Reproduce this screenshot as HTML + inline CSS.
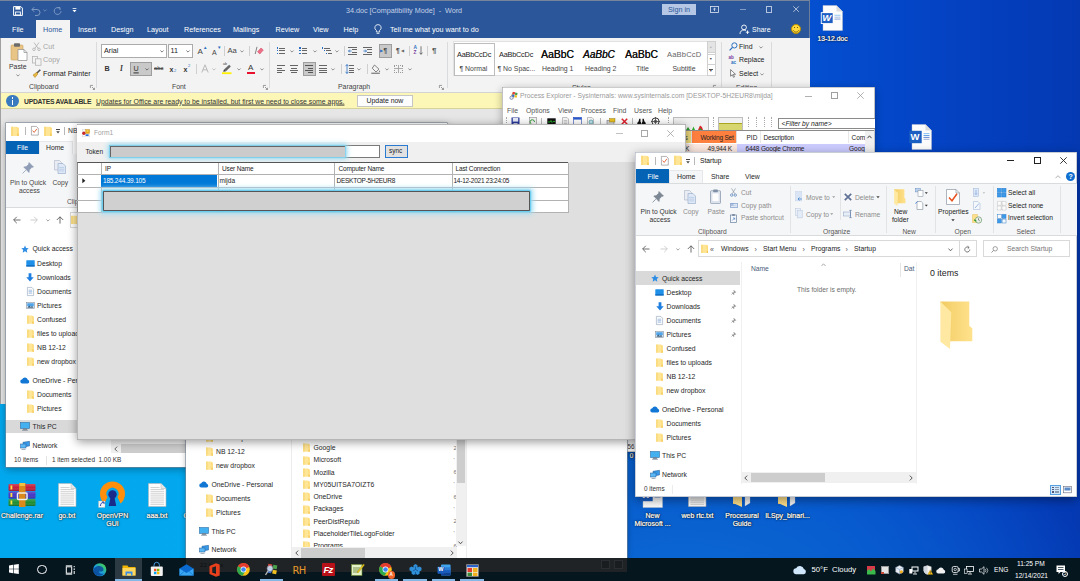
<!DOCTYPE html>
<html><head><meta charset="utf-8"><title>Desktop</title>
<style>
*{box-sizing:border-box;margin:0;padding:0}
html,body{width:1080px;height:581px;overflow:hidden;background:#043cbe}
body{position:relative;font-family:"Liberation Sans",sans-serif;font-size:6.8px;color:#222;line-height:1}
.a{position:absolute}
.t{position:absolute;white-space:nowrap;line-height:1;transform:translateY(-50%)}
.win{position:absolute;overflow:hidden}
svg{position:absolute;overflow:visible}
.vs{position:absolute;width:1px;background:#dadbdc}
</style></head><body>
<div class="a" id="desk" style="left:0;top:0;width:1080px;height:581px;background:
radial-gradient(ellipse 420px 200px at 680px 590px,#0b6ad6 0,#0960cf 35%,rgba(8,84,200,0) 100%),
linear-gradient(90deg,#02a8ee 0,#03a6ee 575px,#0858d0 640px,#0450d0 810px,#0446c8 900px,#043ebc 1000px,#0439b2 1080px)"></div>
<svg style="left:820px;top:4.5px" width="23" height="26" viewBox="0 0 23 26"><path d="M3 .5h13.500l6 6v19H3z" fill="#fcfcfc" stroke="#c8c8c8" stroke-width=".4"/><path d="M16.500 .5v6h6z" fill="#dcdcdc"/><path d="M14.500 10.300h6" stroke="#6ab4f2" stroke-width=".7"/><path d="M14.500 12.200h6" stroke="#8aa8d8" stroke-width=".7"/><path d="M14.500 14.100h6" stroke="#5a80c8" stroke-width=".7"/><rect x=".8" y="7.200" width="12.800" height="11.800" fill="#fff"/><rect x="1.700" y="8.100" width="11" height="10" fill="#1f5fc4"/></svg><span class="t" style="left:822.3px;top:17.7px;font-size:9.500px;color:#fff;font-weight:bold;font-style:italic;letter-spacing:-.5px">W</span><span class="t" style="left:832.5px;top:38.8px;font-size:6.8px;color:#fff;transform:translate(-50%,-50%);text-shadow:.5px .7px .8px rgba(0,0,0,.95),0 0 1.500px rgba(0,0,0,.85),0 0 2.500px rgba(0,0,0,.55);-webkit-text-stroke:.22px #fff;text-align:center">13-12.doc</span><svg style="left:909.3px;top:124.1px" width="23" height="26" viewBox="0 0 23 26"><path d="M3 .5h13.500l6 6v19H3z" fill="#fcfcfc" stroke="#c8c8c8" stroke-width=".4"/><path d="M16.500 .5v6h6z" fill="#dcdcdc"/><path d="M14.500 9.600h6" stroke="#6ab4f2" stroke-width=".8"/><path d="M14.500 11.500h6" stroke="#3f8ae0" stroke-width=".8"/><path d="M14.500 13.400h6" stroke="#3a6fc8" stroke-width=".8"/><path d="M14.500 15.300h6" stroke="#8a9ed0" stroke-width=".8"/><rect x=".3" y="6.800" width="12.400" height="12.400" fill="#1b5ec2"/></svg><span class="t" style="left:910.6px;top:137.3px;font-size:9.500px;color:#fff;font-weight:bold">W</span><svg style="left:8px;top:482.5px" width="28" height="24" viewBox="0 0 28 24"><defs><linearGradient id="rg" x1="0" y1="0" x2="0" y2="1"><stop offset="0" stop-color="#fff" stop-opacity=".18"/><stop offset=".5" stop-color="#fff" stop-opacity="0"/><stop offset="1" stop-color="#000" stop-opacity=".25"/></linearGradient></defs><rect x=".5" y="1" width="27" height="7" rx="1" fill="#c4203e"/><rect x=".5" y="8.500" width="27" height="7" rx="1" fill="#4436c4"/><rect x=".5" y="16" width="27" height="7" rx="1" fill="#1f8f35"/><rect x=".5" y="1" width="27" height="7" rx="1" fill="url(#rg)"/><rect x=".5" y="8.500" width="27" height="7" rx="1" fill="url(#rg)"/><rect x=".5" y="16" width="27" height="7" rx="1" fill="url(#rg)"/><rect x="2.500" y="2.500" width="1.800" height="4" fill="#ffe040"/><rect x="2.500" y="10" width="1.800" height="4" fill="#ffe040"/><rect x="2.500" y="17.500" width="1.800" height="4" fill="#ffe040"/><rect x="11" y="0" width="6.500" height="24" fill="#d98a1a"/><rect x="9.500" y="10" width="9.500" height="6.500" rx="1" fill="none" stroke="#f0f0e8" stroke-width="1.500"/><rect x="11.500" y="0" width="5.500" height="3" fill="#f0c040"/></svg><span class="t" style="left:22px;top:514.7px;font-size:7px;color:#fff;transform:translate(-50%,-50%);text-shadow:.5px .7px .8px rgba(0,0,0,.95),0 0 1.500px rgba(0,0,0,.85),0 0 2.500px rgba(0,0,0,.55);-webkit-text-stroke:.22px #fff;text-align:center">Challenge.rar</span><svg style="left:57.75px;top:482.5px" width="18.5" height="24" viewBox="0 0 18.5 24"><path d="M.5.500h12.500l5 5v18H.5z" fill="#fdfdfd" stroke="#b5b5b5" stroke-width=".6"/><path d="M13 .500v5h5" fill="#e8e8e8" stroke="#b5b5b5" stroke-width=".5"/><path d="M2.500 4.5h9" stroke="#bdbdbd" stroke-width=".7"/><path d="M2.500 6.6h13.5" stroke="#bdbdbd" stroke-width=".7"/><path d="M2.500 8.7h13.5" stroke="#bdbdbd" stroke-width=".7"/><path d="M2.500 10.8h13.5" stroke="#bdbdbd" stroke-width=".7"/><path d="M2.500 12.9h13.5" stroke="#bdbdbd" stroke-width=".7"/><path d="M2.500 15.0h13.5" stroke="#bdbdbd" stroke-width=".7"/><path d="M2.500 17.1h13.5" stroke="#bdbdbd" stroke-width=".7"/><path d="M2.500 19.200000000000003h13.5" stroke="#bdbdbd" stroke-width=".7"/><path d="M2.500 21.3h13.5" stroke="#bdbdbd" stroke-width=".7"/></svg><span class="t" style="left:67px;top:514.7px;font-size:7px;color:#fff;transform:translate(-50%,-50%);text-shadow:.5px .7px .8px rgba(0,0,0,.95),0 0 1.500px rgba(0,0,0,.85),0 0 2.500px rgba(0,0,0,.55);-webkit-text-stroke:.22px #fff;text-align:center">go.txt</span><svg style="left:99px;top:482px" width="27" height="26" viewBox="0 0 27 26"><path d="M5.500 21.500A12.500 12.500 0 1 1 21.500 21.500L18.500 15A6 6 0 1 0 8.500 15z" fill="#ff8f0a"/><circle cx="13.500" cy="12.500" r="4.200" fill="#1a2a8a"/><path d="M11.800 14h3.400l2 10h-7.400z" fill="#1a2a8a"/><rect x="-.5" y="19" width="6.500" height="6.500" fill="#f4f4f4" stroke="#aaa" stroke-width=".3"/><path d="M1.500 24c0-2.500 1-3.500 3-3.500M3 20h2v2" fill="none" stroke="#2a4ab0" stroke-width="1"/></svg><span class="t" style="left:112.5px;top:514.7px;font-size:7px;color:#fff;transform:translate(-50%,-50%);text-shadow:.5px .7px .8px rgba(0,0,0,.95),0 0 1.500px rgba(0,0,0,.85),0 0 2.500px rgba(0,0,0,.55);-webkit-text-stroke:.22px #fff;text-align:center">OpenVPN</span><span class="t" style="left:112.5px;top:523.2px;font-size:7px;color:#fff;transform:translate(-50%,-50%);text-shadow:.5px .7px .8px rgba(0,0,0,.95),0 0 1.500px rgba(0,0,0,.85),0 0 2.500px rgba(0,0,0,.55);-webkit-text-stroke:.22px #fff;text-align:center">GUI</span><svg style="left:147.75px;top:482.5px" width="18.5" height="24" viewBox="0 0 18.5 24"><path d="M.5.500h12.500l5 5v18H.5z" fill="#fdfdfd" stroke="#b5b5b5" stroke-width=".6"/><path d="M13 .500v5h5" fill="#e8e8e8" stroke="#b5b5b5" stroke-width=".5"/><path d="M2.500 4.5h9" stroke="#bdbdbd" stroke-width=".7"/><path d="M2.500 6.6h13.5" stroke="#bdbdbd" stroke-width=".7"/><path d="M2.500 8.7h13.5" stroke="#bdbdbd" stroke-width=".7"/><path d="M2.500 10.8h13.5" stroke="#bdbdbd" stroke-width=".7"/><path d="M2.500 12.9h13.5" stroke="#bdbdbd" stroke-width=".7"/><path d="M2.500 15.0h13.5" stroke="#bdbdbd" stroke-width=".7"/><path d="M2.500 17.1h13.5" stroke="#bdbdbd" stroke-width=".7"/><path d="M2.500 19.200000000000003h13.5" stroke="#bdbdbd" stroke-width=".7"/><path d="M2.500 21.3h13.5" stroke="#bdbdbd" stroke-width=".7"/></svg><span class="t" style="left:157px;top:514.7px;font-size:7px;color:#fff;transform:translate(-50%,-50%);text-shadow:.5px .7px .8px rgba(0,0,0,.95),0 0 1.500px rgba(0,0,0,.85),0 0 2.500px rgba(0,0,0,.55);-webkit-text-stroke:.22px #fff;text-align:center">aaa.txt</span><span class="t" style="left:186px;top:514.7px;font-size:7px;color:#fff;transform:translate(-50%,-50%);text-shadow:.5px .7px .8px rgba(0,0,0,.95),0 0 1.500px rgba(0,0,0,.85),0 0 2.500px rgba(0,0,0,.55);-webkit-text-stroke:.22px #fff;text-align:center">C</span><svg style="left:640px;top:481.5px" width="23" height="26" viewBox="0 0 23 26"><path d="M3 .5h13.500l6 6v19H3z" fill="#fcfcfc" stroke="#c8c8c8" stroke-width=".4"/><path d="M16.500 .5v6h6z" fill="#dcdcdc"/><path d="M14.500 9.600h6" stroke="#6ab4f2" stroke-width=".8"/><path d="M14.500 11.500h6" stroke="#3f8ae0" stroke-width=".8"/><path d="M14.500 13.400h6" stroke="#3a6fc8" stroke-width=".8"/><path d="M14.500 15.300h6" stroke="#8a9ed0" stroke-width=".8"/><rect x=".3" y="6.800" width="12.400" height="12.400" fill="#1b5ec2"/></svg><span class="t" style="left:641.3px;top:494.7px;font-size:9.500px;color:#fff;font-weight:bold">W</span><span class="t" style="left:652.5px;top:514.7px;font-size:7px;color:#fff;transform:translate(-50%,-50%);text-shadow:.5px .7px .8px rgba(0,0,0,.95),0 0 1.500px rgba(0,0,0,.85),0 0 2.500px rgba(0,0,0,.55);-webkit-text-stroke:.22px #fff;text-align:center">New</span><span class="t" style="left:652.5px;top:523.2px;font-size:7px;color:#fff;transform:translate(-50%,-50%);text-shadow:.5px .7px .8px rgba(0,0,0,.95),0 0 1.500px rgba(0,0,0,.85),0 0 2.500px rgba(0,0,0,.55);-webkit-text-stroke:.22px #fff;text-align:center">Microsoft ...</span><svg style="left:687.75px;top:482.5px" width="18.5" height="24" viewBox="0 0 18.5 24"><path d="M.5.500h12.500l5 5v18H.5z" fill="#fdfdfd" stroke="#b5b5b5" stroke-width=".6"/><path d="M13 .500v5h5" fill="#e8e8e8" stroke="#b5b5b5" stroke-width=".5"/><path d="M2.500 4.5h9" stroke="#bdbdbd" stroke-width=".7"/><path d="M2.500 6.6h13.5" stroke="#bdbdbd" stroke-width=".7"/><path d="M2.500 8.7h13.5" stroke="#bdbdbd" stroke-width=".7"/><path d="M2.500 10.8h13.5" stroke="#bdbdbd" stroke-width=".7"/><path d="M2.500 12.9h13.5" stroke="#bdbdbd" stroke-width=".7"/><path d="M2.500 15.0h13.5" stroke="#bdbdbd" stroke-width=".7"/><path d="M2.500 17.1h13.5" stroke="#bdbdbd" stroke-width=".7"/><path d="M2.500 19.200000000000003h13.5" stroke="#bdbdbd" stroke-width=".7"/><path d="M2.500 21.3h13.5" stroke="#bdbdbd" stroke-width=".7"/></svg><span class="t" style="left:697.5px;top:514.7px;font-size:7px;color:#fff;transform:translate(-50%,-50%);text-shadow:.5px .7px .8px rgba(0,0,0,.95),0 0 1.500px rgba(0,0,0,.85),0 0 2.500px rgba(0,0,0,.55);-webkit-text-stroke:.22px #fff;text-align:center">web rtc.txt</span><svg style="left:732px;top:481px" width="20" height="26" viewBox="0 0 20 26"><path d="M1 1h6l2 2v20H1z" fill="#e8bf58"/><path d="M4 4h14v18l-5 3V7z" fill="#f6f6f6" stroke="#ccc" stroke-width=".3"/><rect x="7" y="4" width="6" height="10" fill="#c8283a"/><path d="M1 5l9 3v18L1 22z" fill="#ffe08a"/></svg><span class="t" style="left:742px;top:514.7px;font-size:7px;color:#fff;transform:translate(-50%,-50%);text-shadow:.5px .7px .8px rgba(0,0,0,.95),0 0 1.500px rgba(0,0,0,.85),0 0 2.500px rgba(0,0,0,.55);-webkit-text-stroke:.22px #fff;text-align:center">Procesural</span><span class="t" style="left:742px;top:523.2px;font-size:7px;color:#fff;transform:translate(-50%,-50%);text-shadow:.5px .7px .8px rgba(0,0,0,.95),0 0 1.500px rgba(0,0,0,.85),0 0 2.500px rgba(0,0,0,.55);-webkit-text-stroke:.22px #fff;text-align:center">Guide</span><svg style="left:777px;top:481px" width="20" height="26" viewBox="0 0 20 26"><path d="M1 1h6l2 2v20H1z" fill="#e8bf58"/><path d="M4 4h14v18l-5 3V7z" fill="#f6f6f6" stroke="#ccc" stroke-width=".3"/><rect x="7" y="4" width="6" height="10" fill="#5a6a7a"/><path d="M1 5l9 3v18L1 22z" fill="#ffe08a"/></svg><span class="t" style="left:787.5px;top:514.7px;font-size:7px;color:#fff;transform:translate(-50%,-50%);text-shadow:.5px .7px .8px rgba(0,0,0,.95),0 0 1.500px rgba(0,0,0,.85),0 0 2.500px rgba(0,0,0,.55);-webkit-text-stroke:.22px #fff;text-align:center">ILSpy_binari...</span><span class="t" style="left:631.5px;top:456px;font-size:6.5px;color:#fff;transform:translate(-50%,-50%);text-shadow:.5px .7px .8px rgba(0,0,0,.95),0 0 1.500px rgba(0,0,0,.85),0 0 2.500px rgba(0,0,0,.55);-webkit-text-stroke:.22px #fff;text-align:center">0</span><div class="win" id="word" style="left:0;top:0;width:810px;height:404px;background:#e6e6e6">
 <div class="a" style="left:0;top:0;width:810px;height:38px;background:#2b579a"></div>
 <div class="a" style="left:0;top:0;width:810px;height:.9px;background:#76849c"></div><div class="a" style="left:809.200px;top:0;width:.8px;height:404px;background:#6f7f99"></div>
 <!-- quick access -->
 <svg style="left:13px;top:6px" width="10" height="10" viewBox="0 0 10 10"><path d="M.6.6h7.3l1.5 1.5v7.3H.6z" fill="none" stroke="#fff" stroke-width="1"/><rect x="2.4" y="1" width="5" height="2.6" fill="#fff"/><rect x="2.6" y="6" width="4.8" height="3" fill="none" stroke="#fff" stroke-width=".9"/></svg>
 <svg style="left:31px;top:6px" width="10" height="10" viewBox="0 0 10 10"><path d="M1 3.5h5a3 3 0 0 1 0 6H4M3.2 1.2L.9 3.5l2.3 2.3" fill="none" stroke="#7f9ac4" stroke-width="1"/></svg>
 <svg style="left:43px;top:9px" width="4" height="3" viewBox="0 0 4 3"><path d="M.3.5L2 2.2 3.7.5" fill="none" stroke="#7f9ac4" stroke-width=".7"/></svg>
 <svg style="left:53px;top:6px" width="9" height="10" viewBox="0 0 9 10"><path d="M6.5 2.2A3.4 3.4 0 1 0 8 5.2M4.6 1.6h2.4v2.4" fill="none" stroke="#7f9ac4" stroke-width="1"/></svg>
 <svg style="left:72px;top:8px" width="5" height="5" viewBox="0 0 5 5"><path d="M.6.5h3.8" stroke="#fff" stroke-width=".8"/><path d="M.5 2h4L2.5 4.3z" fill="#fff"/></svg>
 <span class="t" style="left:346px;top:11px;font-size:7.2px;color:#c3d0e6">34.doc [Compatibility Mode]&nbsp; -&nbsp; Word</span>
 <!-- sign in -->
 <div class="a" style="left:662px;top:4.200px;width:34px;height:11px;background:#b5c7e5"></div>
 <span class="t" style="left:668px;top:10px;font-size:7.2px;color:#2b579a">Sign in</span>
 <svg style="left:710px;top:6px" width="9" height="7" viewBox="0 0 9 7"><rect x=".5" y=".5" width="8" height="6" fill="none" stroke="#dfe7f3" stroke-width=".8"/><path d="M4.5 5V2.2M3.2 3.4l1.3-1.3 1.3 1.3" fill="none" stroke="#dfe7f3" stroke-width=".8"/></svg>
 <div class="a" style="left:739.500px;top:8.800px;width:6px;height:.9px;background:#7f9ac4"></div>
 <div class="a" style="left:766.300px;top:6.300px;width:6px;height:6.300px;border:.8px solid #b4c3de"></div>
 <svg style="left:792.800px;top:6.200px" width="6.200" height="6.200" viewBox="0 0 7 7"><path d="M.4.4l6.2 6.2M6.6.4L.4 6.6" stroke="#cfd9ea" stroke-width=".9"/></svg>
 <!-- tabs -->
 <div class="a" style="left:36px;top:20px;width:34px;height:18.5px;background:#f3f3f3"></div>
 <span class="t" style="left:12px;top:29.5px;font-size:7.2px;color:#fff">File</span>
 <span class="t" style="left:43px;top:29.5px;font-size:7.2px;color:#2b579a">Home</span>
 <span class="t" style="left:78px;top:29.5px;font-size:7.2px;color:#fff">Insert</span>
 <span class="t" style="left:111px;top:29.5px;font-size:7.2px;color:#fff">Design</span>
 <span class="t" style="left:147px;top:29.5px;font-size:7.2px;color:#fff">Layout</span>
 <span class="t" style="left:184px;top:29.5px;font-size:7.2px;color:#fff">References</span>
 <span class="t" style="left:233px;top:29.5px;font-size:7.2px;color:#fff">Mailings</span>
 <span class="t" style="left:275.5px;top:29.5px;font-size:7.2px;color:#fff">Review</span>
 <span class="t" style="left:313px;top:29.5px;font-size:7.2px;color:#fff">View</span>
 <span class="t" style="left:343.5px;top:29.5px;font-size:7.2px;color:#fff">Help</span>
 <svg style="left:374px;top:24px" width="8" height="11" viewBox="0 0 8 11"><path d="M4 .6a3.1 3.1 0 0 0-1.6 5.8v1.6h3.2V6.4A3.1 3.1 0 0 0 4 .6zM2.6 9.4h2.8" fill="none" stroke="#fff" stroke-width=".8"/></svg>
 <span class="t" style="left:390px;top:29.5px;font-size:7.2px;color:#fff">Tell me what you want to do</span>
 <svg style="left:739px;top:24px" width="11" height="11" viewBox="0 0 11 11"><circle cx="5" cy="3.4" r="2.4" fill="none" stroke="#fff" stroke-width=".9"/><path d="M1 10c0-2.6 1.7-4 4-4 .8 0 1.500.2 2 .5M8.500 6.500v3.500M6.800 8.200h3.400" fill="none" stroke="#fff" stroke-width=".9"/></svg>
 <span class="t" style="left:752px;top:29.500px;font-size:6.950px;color:#fff">Share</span>
 <div class="a" style="left:791px;top:24px;width:10.200px;height:10.200px;border-radius:50%;background:#ffd83b;border:.6px solid #b98f00"></div>
 <div class="a" style="left:793.6px;top:26.6px;width:1.4px;height:1.8px;background:#5a4300;border-radius:50%"></div>
 <div class="a" style="left:797px;top:26.6px;width:1.4px;height:1.8px;background:#5a4300;border-radius:50%"></div>
 <svg style="left:793px;top:29.600px" width="6" height="3" viewBox="0 0 6 3"><path d="M.3.3c1 2.400 4.400 2.400 5.400 0" fill="none" stroke="#5a4300" stroke-width=".7"/></svg>
 <!-- ribbon -->
 <div class="a" style="left:0;top:38px;width:810px;height:55px;background:#f3f3f3;border-bottom:1px solid #d4d4d4"></div>
 <svg style="left:10px;top:42px" width="18" height="19" viewBox="0 0 18 19"><rect x="1" y="3" width="12" height="15" rx="1" fill="#e8c587" stroke="#c9a25a" stroke-width=".6"/><rect x="4" y="1.200" width="6" height="3.600" rx=".8" fill="#6b6b6b"/><path d="M8 7.500h6l3 3v8H8z" fill="#fff" stroke="#8c8c8c" stroke-width=".7"/><path d="M14 7.500v3h3" fill="none" stroke="#8c8c8c" stroke-width=".7"/></svg><span class="t" style="left:9px;top:66.500px;font-size:6.900px;color:#333">Paste</span><svg style="left:15.5px;top:74px" width="4" height="3" viewBox="0 0 4 3"><path d="M.4.5L2 2.100 3.600.5" fill="none" stroke="#666" stroke-width=".7"/></svg><svg style="left:32px;top:42px" width="9" height="9" viewBox="0 0 9 9"><path d="M2 .5l4.200 6M7 .5L2.800 6.500" stroke="#b0b0b0" stroke-width=".8" fill="none"/><circle cx="2" cy="7.300" r="1.300" fill="none" stroke="#b0b0b0" stroke-width=".8"/><circle cx="7" cy="7.300" r="1.300" fill="none" stroke="#b0b0b0" stroke-width=".8"/></svg><span class="t" style="left:43px;top:46.500px;font-size:7.2px;color:#a6a6a6">Cut</span><svg style="left:31.500px;top:55.500px" width="10" height="10" viewBox="0 0 10 10"><rect x=".5" y=".5" width="5" height="6.500" fill="#f3f3f3" stroke="#b5b5b5" stroke-width=".8"/><rect x="3.500" y="2.800" width="5.500" height="6.500" fill="#f3f3f3" stroke="#b5b5b5" stroke-width=".8"/></svg><span class="t" style="left:43px;top:60px;font-size:7.2px;color:#a6a6a6">Copy</span><svg style="left:32px;top:68.500px" width="9" height="9" viewBox="0 0 9 9"><path d="M8.300.7L4.500 4.500" stroke="#555" stroke-width="1.600"/><path d="M4.800 3.200L1 6l2 2.500L5.800 5z" fill="#e9b840" stroke="#a87d16" stroke-width=".5"/></svg><span class="t" style="left:43px;top:73.500px;font-size:7.2px;color:#222">Format Painter</span><span class="t" style="left:29px;top:87px;font-size:6.9px;color:#444">Clipboard</span><svg style="left:90.0px;top:84.5px" width="5" height="5" viewBox="0 0 5 5"><path d="M.4 3V.4H3M2 2l2.400 2.400M4.500 2.800v1.700H2.800" fill="none" stroke="#777" stroke-width=".7"/></svg><div class="vs" style="left:96px;top:42px;height:46px"></div><div class="a" style="left:101px;top:44px;width:65.500px;height:13.700px;background:#fff;border:1px solid #ababab"></div><span class="t" style="left:104px;top:51px;font-size:7.2px;color:#222">Arial</span><svg style="left:160px;top:50px" width="4" height="3" viewBox="0 0 4 3"><path d="M.4.5L2 2.100 3.600.5" fill="none" stroke="#444" stroke-width=".7"/></svg><div class="a" style="left:168px;top:44px;width:24.500px;height:13.700px;background:#fff;border:1px solid #ababab"></div><span class="t" style="left:170.500px;top:51px;font-size:7.2px;color:#222">11</span><svg style="left:186px;top:50px" width="4" height="3" viewBox="0 0 4 3"><path d="M.4.5L2 2.100 3.600.5" fill="none" stroke="#444" stroke-width=".7"/></svg><span class="t" style="left:197.500px;top:51.500px;font-size:8px;color:#444">A</span><span class="t" style="left:203px;top:47.500px;font-size:4.500px;color:#2b6fc0">▲</span><span class="t" style="left:212px;top:52px;font-size:7px;color:#444">A</span><span class="t" style="left:217px;top:47.500px;font-size:4.500px;color:#2b6fc0">▼</span><div class="vs" style="left:223.500px;top:46px;height:10px;background:#cfcfcf"></div><span class="t" style="left:227.500px;top:51px;font-size:7.600px;color:#444">Aa</span><svg style="left:239.5px;top:50px" width="4" height="3" viewBox="0 0 4 3"><path d="M.4.5L2 2.100 3.600.5" fill="none" stroke="#666" stroke-width=".7"/></svg><div class="vs" style="left:249px;top:46px;height:10px;background:#cfcfcf"></div><svg style="left:254px;top:45.500px" width="10" height="10" viewBox="0 0 10 10"><path d="M1.200 8L3 .8" stroke="#666" stroke-width=".8"/><path d="M3.500 5.800L7 2l2.300 2-3.500 4z" fill="#ee6f86" stroke="#c9405c" stroke-width=".5"/></svg><span class="t" style="left:104.500px;top:68.5px;font-size:7.200px;color:#333;font-weight:bold">B</span><span class="t" style="left:120px;top:69.800px;font-size:7.200px;color:#333;font-style:italic;font-family:'Liberation Serif',serif;font-weight:bold">I</span><div class="a" style="left:129.500px;top:62px;width:22px;height:13.500px;background:#c9c9c9;border:1px solid #9e9e9e"></div><span class="t" style="left:133.500px;top:68.5px;font-size:7.200px;color:#333;text-decoration:underline">U</span><svg style="left:144.5px;top:67.5px" width="4" height="3" viewBox="0 0 4 3"><path d="M.4.5L2 2.100 3.600.5" fill="none" stroke="#444" stroke-width=".7"/></svg><span class="t" style="left:154px;top:68.8px;font-size:5.800px;color:#444;text-decoration:line-through">abc</span><span class="t" style="left:169.500px;top:68.5px;font-size:7px;color:#333;font-weight:bold">x</span><span class="t" style="left:174px;top:70.5px;font-size:4px;color:#2b6fc0">2</span><span class="t" style="left:183.500px;top:68.5px;font-size:7px;color:#333;font-weight:bold">x</span><span class="t" style="left:188px;top:66.0px;font-size:4px;color:#2b6fc0">2</span><div class="vs" style="left:195.5px;top:63.5px;height:10px;background:#cfcfcf"></div><svg style="left:201px;top:64px" width="8" height="9" viewBox="0 0 8 9"><path d="M.8 8.500L4 .8l3.200 7.700M2 5.800h4" fill="none" stroke="#b9b9b9" stroke-width="1"/></svg><svg style="left:212px;top:67.5px" width="4" height="3" viewBox="0 0 4 3"><path d="M.4.5L2 2.100 3.600.5" fill="none" stroke="#aaa" stroke-width=".7"/></svg><svg style="left:222px;top:63.500px" width="10" height="10" viewBox="0 0 10 10"><path d="M2 5.500L7.200.8l1.600 1.600L4 7.200z" fill="#666"/><path d="M1.200 7.800l.8-2.300 2 1.700z" fill="#333"/><rect x="0" y="8.300" width="9.500" height="1.800" fill="#ffef00"/></svg><span class="t" style="left:223px;top:65px;font-size:3.600px;color:#444">ab</span><svg style="left:236.5px;top:67.5px" width="4" height="3" viewBox="0 0 4 3"><path d="M.4.5L2 2.100 3.600.5" fill="none" stroke="#666" stroke-width=".7"/></svg><span class="t" style="left:248px;top:67.500px;font-size:8px;color:#333;font-weight:normal">A</span><div class="a" style="left:246.500px;top:71.800px;width:8.500px;height:1.900px;background:#e8112d"></div><svg style="left:259.5px;top:67.5px" width="4" height="3" viewBox="0 0 4 3"><path d="M.4.5L2 2.100 3.600.5" fill="none" stroke="#666" stroke-width=".7"/></svg><span class="t" style="left:172px;top:87px;font-size:6.900px;color:#444">Font</span><svg style="left:263.0px;top:84.5px" width="5" height="5" viewBox="0 0 5 5"><path d="M.4 3V.4H3M2 2l2.400 2.400M4.500 2.800v1.700H2.800" fill="none" stroke="#777" stroke-width=".7"/></svg><div class="vs" style="left:269px;top:42px;height:46px"></div><div class="a" style="left:276.5px;top:47.3px;width:1.500px;height:1.300px;background:#2b6fc0"></div><div class="a" style="left:279.0px;top:47.5px;width:5.500px;height:.9px;background:#666"></div><div class="a" style="left:276.5px;top:50.099999999999994px;width:1.500px;height:1.300px;background:#2b6fc0"></div><div class="a" style="left:279.0px;top:50.3px;width:5.500px;height:.9px;background:#666"></div><div class="a" style="left:276.5px;top:52.9px;width:1.500px;height:1.300px;background:#2b6fc0"></div><div class="a" style="left:279.0px;top:53.1px;width:5.500px;height:.9px;background:#666"></div><svg style="left:289.5px;top:50px" width="4" height="3" viewBox="0 0 4 3"><path d="M.4.5L2 2.100 3.600.5" fill="none" stroke="#666" stroke-width=".7"/></svg><div class="a" style="left:299px;top:47.3px;width:1.500px;height:1.300px;background:#2b6fc0"></div><div class="a" style="left:301.5px;top:47.5px;width:5.500px;height:.9px;background:#666"></div><div class="a" style="left:299px;top:50.099999999999994px;width:1.500px;height:1.300px;background:#2b6fc0"></div><div class="a" style="left:301.5px;top:50.3px;width:5.500px;height:.9px;background:#666"></div><div class="a" style="left:299px;top:52.9px;width:1.500px;height:1.300px;background:#2b6fc0"></div><div class="a" style="left:301.5px;top:53.1px;width:5.500px;height:.9px;background:#666"></div><svg style="left:312.5px;top:50px" width="4" height="3" viewBox="0 0 4 3"><path d="M.4.5L2 2.100 3.600.5" fill="none" stroke="#666" stroke-width=".7"/></svg><div class="a" style="left:321.5px;top:47.3px;width:1.400px;height:1.300px;background:#2b6fc0"></div><div class="a" style="left:324px;top:47.5px;width:6px;height:.9px;background:#666"></div><div class="a" style="left:323.5px;top:50.099999999999994px;width:1.400px;height:1.300px;background:#2b6fc0"></div><div class="a" style="left:326px;top:50.3px;width:5px;height:.9px;background:#666"></div><div class="a" style="left:325.5px;top:52.9px;width:1.400px;height:1.300px;background:#2b6fc0"></div><div class="a" style="left:328px;top:53.1px;width:4px;height:.9px;background:#666"></div><svg style="left:334.5px;top:50px" width="4" height="3" viewBox="0 0 4 3"><path d="M.4.5L2 2.100 3.600.5" fill="none" stroke="#666" stroke-width=".7"/></svg><div class="vs" style="left:343.5px;top:46px;height:10px;background:#cfcfcf"></div><div class="a" style="left:348.0px;top:47.1px;width:9px;height:0.8px;background:#666"></div><div class="a" style="left:352.0px;top:49.300000000000004px;width:5px;height:0.8px;background:#666"></div><div class="a" style="left:352.0px;top:51.5px;width:5px;height:0.8px;background:#666"></div><div class="a" style="left:348.0px;top:53.7px;width:9px;height:0.8px;background:#666"></div><svg style="left:348.0px;top:48.5px" width="4" height="4" viewBox="0 0 4 4"><path d="M3.600 2H.6M1.800.6L.5 2l1.300 1.400" fill="none" stroke="#2b6fc0" stroke-width=".8"/></svg><div class="a" style="left:362.5px;top:47.1px;width:9px;height:0.8px;background:#666"></div><div class="a" style="left:366.5px;top:49.300000000000004px;width:5px;height:0.8px;background:#666"></div><div class="a" style="left:366.5px;top:51.5px;width:5px;height:0.8px;background:#666"></div><div class="a" style="left:362.5px;top:53.7px;width:9px;height:0.8px;background:#666"></div><svg style="left:362.5px;top:48.5px" width="4" height="4" viewBox="0 0 4 4"><path d="M.4 2h3M2.200.6L3.500 2 2.200 3.400" fill="none" stroke="#2b6fc0" stroke-width=".8"/></svg><div class="a" style="left:378.500px;top:44px;width:13.500px;height:13.500px;background:#c9c9c9;border:1px solid #9e9e9e"></div><span class="t" style="left:383.500px;top:51px;font-size:6.500px;color:#444;font-weight:bold">¶</span><span class="t" style="left:380.200px;top:51px;font-size:4px;color:#2b6fc0">▶</span><span class="t" style="left:396px;top:51px;font-size:6.500px;color:#444;font-weight:bold">¶</span><span class="t" style="left:400.500px;top:51px;font-size:4px;color:#666">◀</span><div class="vs" style="left:408.5px;top:46px;height:10px;background:#cfcfcf"></div><span class="t" style="left:413.500px;top:48.300px;font-size:4.800px;color:#2b6fc0;font-weight:bold">A</span><span class="t" style="left:413.500px;top:53px;font-size:4.800px;color:#7a3fa0;font-weight:bold">Z</span><svg style="left:418.500px;top:46px" width="4" height="9" viewBox="0 0 4 9"><path d="M2 .3v8M.5 6.600L2 8.300l1.500-1.700" fill="none" stroke="#555" stroke-width=".8"/></svg><div class="vs" style="left:426.5px;top:46px;height:10px;background:#cfcfcf"></div><span class="t" style="left:432px;top:50.500px;font-size:8px;color:#555;font-weight:bold">¶</span><div class="a" style="left:276.5px;top:65.4px;width:8px;height:0.8px;background:#666"></div><div class="a" style="left:276.5px;top:67.5px;width:5.5px;height:0.8px;background:#666"></div><div class="a" style="left:276.5px;top:69.60000000000001px;width:8px;height:0.8px;background:#666"></div><div class="a" style="left:276.5px;top:71.7px;width:5.5px;height:0.8px;background:#666"></div><div class="a" style="left:290px;top:65.4px;width:8px;height:0.8px;background:#666"></div><div class="a" style="left:291.3px;top:67.5px;width:5.5px;height:0.8px;background:#666"></div><div class="a" style="left:290px;top:69.60000000000001px;width:8px;height:0.8px;background:#666"></div><div class="a" style="left:291.3px;top:71.7px;width:5.5px;height:0.8px;background:#666"></div><div class="a" style="left:302.500px;top:62px;width:13.500px;height:13.500px;background:#c9c9c9;border:1px solid #9e9e9e"></div><div class="a" style="left:305.2px;top:65.4px;width:8px;height:0.8px;background:#555"></div><div class="a" style="left:307.7px;top:67.5px;width:5.5px;height:0.8px;background:#555"></div><div class="a" style="left:305.2px;top:69.60000000000001px;width:8px;height:0.8px;background:#555"></div><div class="a" style="left:307.7px;top:71.7px;width:5.5px;height:0.8px;background:#555"></div><div class="a" style="left:319px;top:65.4px;width:8px;height:0.8px;background:#666"></div><div class="a" style="left:319px;top:67.5px;width:8px;height:0.8px;background:#666"></div><div class="a" style="left:319px;top:69.60000000000001px;width:8px;height:0.8px;background:#666"></div><div class="a" style="left:319px;top:71.7px;width:8px;height:0.8px;background:#666"></div><svg style="left:330.5px;top:67.5px" width="4" height="3" viewBox="0 0 4 3"><path d="M.4.5L2 2.100 3.600.5" fill="none" stroke="#666" stroke-width=".7"/></svg><div class="vs" style="left:340.5px;top:63.5px;height:10px;background:#cfcfcf"></div><div class="a" style="left:349px;top:65.4px;width:5px;height:0.8px;background:#666"></div><div class="a" style="left:349px;top:67.5px;width:5px;height:0.8px;background:#666"></div><div class="a" style="left:349px;top:69.60000000000001px;width:5px;height:0.8px;background:#666"></div><div class="a" style="left:349px;top:71.7px;width:5px;height:0.8px;background:#666"></div><svg style="left:344.500px;top:64px" width="4" height="10" viewBox="0 0 4 10"><path d="M2 .6v8.800M.5 2.200L2 .5l1.500 1.700M.5 7.800L2 9.500l1.500-1.700" fill="none" stroke="#2b6fc0" stroke-width=".8"/></svg><svg style="left:356.5px;top:67.5px" width="4" height="3" viewBox="0 0 4 3"><path d="M.4.5L2 2.100 3.600.5" fill="none" stroke="#666" stroke-width=".7"/></svg><div class="vs" style="left:366.5px;top:63.5px;height:10px;background:#cfcfcf"></div><svg style="left:371px;top:63.500px" width="10" height="10" viewBox="0 0 10 10"><path d="M3.500 1L8 5.200 5 8 1.200 4.200z" fill="#f3f3f3" stroke="#666" stroke-width=".8"/><path d="M8.600 6.200c.6 1 .8 1.500.2 1.900-.6.200-1-.5-.2-1.900z" fill="#666"/><rect x=".3" y="8.600" width="8.500" height="1.400" fill="#888"/></svg><svg style="left:384.5px;top:67.5px" width="4" height="3" viewBox="0 0 4 3"><path d="M.4.5L2 2.100 3.600.5" fill="none" stroke="#666" stroke-width=".7"/></svg><div class="a" style="left:394px;top:64.500px;width:8.500px;height:8.500px;border:.8px dotted #999"></div><div class="a" style="left:397.900px;top:64.500px;width:.8px;height:8.500px;background:#aaa"></div><div class="a" style="left:394px;top:68.400px;width:8.500px;height:.8px;background:#aaa"></div><svg style="left:407.5px;top:67.5px" width="4" height="3" viewBox="0 0 4 3"><path d="M.4.5L2 2.100 3.600.5" fill="none" stroke="#666" stroke-width=".7"/></svg><span class="t" style="left:338px;top:87px;font-size:6.900px;color:#444">Paragraph</span><svg style="left:439.0px;top:84.5px" width="5" height="5" viewBox="0 0 5 5"><path d="M.4 3V.4H3M2 2l2.400 2.400M4.500 2.800v1.700H2.800" fill="none" stroke="#777" stroke-width=".7"/></svg><div class="vs" style="left:447px;top:42px;height:46px"></div><div class="a" style="left:452.500px;top:41.300px;width:263px;height:35.200px;background:#fff;border:1px solid #e1e1e1"></div><div class="a" style="left:453.500px;top:42.500px;width:41.500px;height:33.500px;border:1.800px solid #bdbdbd"></div><span class="t" style="left:457px;top:54.500px;font-size:7.300px;color:#222;letter-spacing:-.2px">AaBbCcDc</span><span class="t" style="left:459.500px;top:69px;font-size:6.900px;color:#444">¶ Normal</span><span class="t" style="left:499px;top:54.500px;font-size:7.300px;color:#222;letter-spacing:-.2px">AaBbCcDc</span><span class="t" style="left:497.500px;top:69px;font-size:6.900px;color:#444">¶ No Spac...</span><span class="t" style="left:541px;top:55px;font-size:10.400px;color:#111;text-shadow:.2px 0 0 #111">AaBbC</span><span class="t" style="left:542px;top:69px;font-size:6.900px;color:#444">Heading 1</span><span class="t" style="left:583px;top:55px;font-size:10px;color:#111;font-style:italic;text-shadow:.25px 0 0 #111">AaBbC</span><span class="t" style="left:585px;top:69px;font-size:6.900px;color:#444">Heading 2</span><span class="t" style="left:625px;top:55px;font-size:10.400px;color:#111;text-shadow:.2px 0 0 #111">AaBbC</span><span class="t" style="left:636px;top:69px;font-size:6.900px;color:#444">Title</span><span class="t" style="left:667px;top:54.500px;font-size:7.600px;color:#666;letter-spacing:.15px">AaBbCcD</span><span class="t" style="left:672.500px;top:69px;font-size:6.900px;color:#444">Subtitle</span><div class="a" style="left:706.500px;top:41.300px;width:9px;height:35.200px;background:#fff;border:1px solid #d0d0d0"></div><div class="a" style="left:706.500px;top:41.300px;width:9px;height:12.200px;background:#e4e4e4;border:1px solid #d0d0d0"></div><div class="a" style="left:706.500px;top:53.500px;width:9px;height:11.500px;border:1px solid #d0d0d0"></div><span class="t" style="left:709px;top:47.500px;font-size:3.600px;color:#bbb">▲</span><span class="t" style="left:709px;top:59.500px;font-size:3.600px;color:#555">▼</span><span class="t" style="left:709px;top:71.500px;font-size:3.600px;color:#555">▼</span><div class="a" style="left:708.800px;top:68.500px;width:4.200px;height:.7px;background:#555"></div><span class="t" style="left:572px;top:87.500px;font-size:6.900px;color:#444">Styles</span><svg style="left:713.0px;top:84.5px" width="5" height="5" viewBox="0 0 5 5"><path d="M.4 3V.4H3M2 2l2.400 2.400M4.500 2.800v1.700H2.800" fill="none" stroke="#777" stroke-width=".7"/></svg><div class="vs" style="left:721px;top:42px;height:46px"></div><svg style="left:728.500px;top:42px" width="9" height="9" viewBox="0 0 9 9"><circle cx="5.400" cy="3.400" r="2.600" fill="none" stroke="#2b6fc0" stroke-width="1"/><path d="M3.500 5.400L.6 8.400" stroke="#2b6fc0" stroke-width="1.200"/></svg><span class="t" style="left:739px;top:46.500px;font-size:6.950px;color:#222">Find</span><svg style="left:758.5px;top:45.5px" width="4" height="3" viewBox="0 0 4 3"><path d="M.4.5L2 2.100 3.600.5" fill="none" stroke="#666" stroke-width=".7"/></svg><span class="t" style="left:728.500px;top:58px;font-size:4.600px;color:#7a3fa0;font-weight:bold">ab</span><span class="t" style="left:731px;top:62.500px;font-size:4.600px;color:#2b6fc0;font-weight:bold">ac</span><span class="t" style="left:739px;top:60px;font-size:6.950px;color:#222">Replace</span><svg style="left:730px;top:69px" width="6" height="9" viewBox="0 0 6 9"><path d="M.6.6v6.600l1.700-1.500 1.200 2.600 1-.5-1.200-2.500h2.200z" fill="#fff" stroke="#555" stroke-width=".7"/></svg><span class="t" style="left:739px;top:73.500px;font-size:6.950px;color:#222">Select</span><svg style="left:759.5px;top:72.5px" width="4" height="3" viewBox="0 0 4 3"><path d="M.4.5L2 2.100 3.600.5" fill="none" stroke="#666" stroke-width=".7"/></svg><span class="t" style="left:736px;top:87.500px;font-size:6.900px;color:#444">Editing</span><div class="vs" style="left:771px;top:42px;height:46px"></div>
 <!-- update bar -->
 <div class="a" style="left:0;top:93px;width:810px;height:16px;background:#fcf7b6;border-bottom:1px solid #d8d39a"></div>
 <div class="a" style="left:6.300px;top:94.800px;width:12.400px;height:12.400px;border-radius:50%;background:#3a7abf"></div>
 <div class="a" style="left:11.800px;top:97.200px;width:1.5px;height:1.6px;background:#fff"></div>
 <div class="a" style="left:11.800px;top:99.600px;width:1.5px;height:5px;background:#fff"></div>
 <span class="t" style="left:24px;top:101.500px;font-size:6.8px;color:#333;font-weight:bold;letter-spacing:-.25px">UPDATES AVAILABLE</span>
 <span class="t" style="left:96px;top:101.500px;font-size:6.9px;color:#333;text-decoration:underline">Updates for Office are ready to be installed, but first we need to close some apps.</span>
 <div class="a" style="left:357px;top:94.500px;width:56px;height:12.500px;background:#fdfdfd;border:1px solid #c6c6c6"></div>
 <span class="t" style="left:366.500px;top:101px;font-size:6.9px;color:#222">Update now</span>
 <!-- doc area edge -->
 <div class="a" style="left:0;top:38px;width:1.300px;height:366px;background:linear-gradient(90deg,#8e8e8e,#b4b4b4)"></div>
</div>
<div class="win" id="exl" style="left:5.5px;top:122.5px;width:441.5px;height:344.5px;background:#fff;box-shadow:0 0 0 .6px #7a8796,0 2px 8px rgba(0,0,0,.35)"><div class="a" style="left:-5.5px;top:-122.5px;width:1080px;height:581px"><div class="a" style="left:6px;top:122px;width:441px;height:18px;background:#fff;"></div><svg style="left:11.28px;top:125.83px" width="8.05" height="10.35" viewBox="0 0 7 9"><path d="M.3.6h4.500l1.900 1.100v7H.3z" fill="#ffe596"/><path d="M.3.600h1.100v8.100H.3z" fill="#f7d36a"/><path d="M5 .7l1.700 1v7h-.9z" fill="#ffdb7a"/><path d="M5.400 6.200l1.300.6v1.900H5.400z" fill="#f3c95a"/></svg><div class="a" style="left:24.5px;top:127px;width:0.8px;height:8px;background:#b8b8b8;"></div><svg style="left:30.5px;top:126.2px" width="8" height="9.5" viewBox="0 0 8 9.5"><path d="M.4.4h5l1.900 1.900v6.800H.4z" fill="#fff" stroke="#7d7d7d" stroke-width=".6"/><path d="M1.600 4.600l1.600 1.800 2.700-3.600" fill="none" stroke="#e05a2a" stroke-width=".9"/></svg><svg style="left:43.98px;top:125.83px" width="8.05" height="10.35" viewBox="0 0 7 9"><path d="M.3.6h4.500l1.900 1.100v7H.3z" fill="#ffe596"/><path d="M.3.600h1.100v8.100H.3z" fill="#f7d36a"/><path d="M5 .7l1.700 1v7h-.9z" fill="#ffdb7a"/><path d="M5.400 6.200l1.300.6v1.900H5.400z" fill="#f3c95a"/></svg><div class="a" style="left:55.5px;top:129.4px;width:4px;height:0.8px;background:#444;"></div><svg style="left:55.5px;top:131px" width="4" height="3" viewBox="0 0 4 3"><path d="M.2.300h3.600L2 2.500z" fill="#444"/></svg><div class="a" style="left:64px;top:127px;width:0.8px;height:8px;background:#b8b8b8;"></div><span class="t" style="left:68px;top:131.3px;font-size:6.8px;color:#333;">NB 12-12</span><div class="a" style="left:6px;top:140px;width:441px;height:14px;background:#fff;"></div><div class="a" style="left:6px;top:140.5px;width:32.5px;height:13.5px;background:#0563b5;"></div><span class="t" style="left:17px;top:147.5px;font-size:6.8px;color:#fff;">File</span><div class="a" style="left:38.5px;top:140.5px;width:34px;height:14px;background:#f5f6f7;border:1px solid #e6e7e8;border-bottom:none"></div><span class="t" style="left:46px;top:147.5px;font-size:6.8px;color:#1f1f1f;">Home</span><div class="a" style="left:6px;top:154px;width:441px;height:53.5px;background:#f5f6f7;border-bottom:1px solid #dadbdc"></div><svg style="left:22px;top:162px" width="12" height="12" viewBox="0 0 12 12"><path d="M7 .6l4.400 4.400-1.600.3L7.200 8l-.2 2.400L1.800 5l2.300-.2 2.700-2.600zM3.800 8.200L.6 11.400" fill="#8e9db5" stroke="#8e9db5" stroke-width=".8" stroke-linejoin="round"/></svg><span class="t" style="left:10px;top:183px;font-size:6.7px;color:#444;">Pin to Quick</span><span class="t" style="left:19px;top:191px;font-size:6.7px;color:#444;">access</span><svg style="left:54px;top:160px" width="12" height="14" viewBox="0 0 12 14"><path d="M.5.500h5l2 2v7.500h-7z" fill="#e9edf3" stroke="#a8b4c4" stroke-width=".6"/><path d="M4 3.500h5l2.500 2.500v7.500H4z" fill="#dfe8f6" stroke="#8fa6c6" stroke-width=".6"/><path d="M5.200 7.500h5M5.200 9.200h5M5.200 10.900h5" stroke="#a9bfe0" stroke-width=".6"/></svg><span class="t" style="left:52.5px;top:183px;font-size:6.7px;color:#444;">Copy</span><span class="t" style="left:67px;top:201.5px;font-size:6.7px;color:#555;">Clipboard</span><svg style="left:13px;top:216px" width="8" height="8" viewBox="0 0 8 8"><path d="M7.500 4H.8M3.800.8L.600 4l3.200 3.200" fill="none" stroke="#555" stroke-width=".85"/></svg><svg style="left:30px;top:216px" width="8" height="8" viewBox="0 0 8 8"><path d="M.5 4h6.700M4.200.8L7.400 4 4.200 7.200" fill="none" stroke="#c4c4c4" stroke-width=".85"/></svg><svg style="left:45.5px;top:219px" width="4" height="3" viewBox="0 0 4 3"><path d="M.4.5L2 2.1 3.600.5" fill="none" stroke="#777" stroke-width="0.7"/></svg><svg style="left:56px;top:216px" width="8" height="8" viewBox="0 0 8 8"><path d="M4 7.600V.8M.8 4L4 .8 7.200 4" fill="none" stroke="#555" stroke-width=".85"/></svg><div class="a" style="left:69.5px;top:212px;width:240px;height:16px;background:#fff;border:1px solid #d9d9d9"></div><svg style="left:70.83px;top:215.28px" width="7.35" height="9.45" viewBox="0 0 7 9"><path d="M.3.6h4.500l1.900 1.100v7H.3z" fill="#ffe596"/><path d="M.3.600h1.100v8.100H.3z" fill="#f7d36a"/><path d="M5 .7l1.700 1v7h-.9z" fill="#ffdb7a"/><path d="M5.400 6.200l1.300.6v1.900H5.400z" fill="#f3c95a"/></svg><div class="a" style="left:6px;top:419.5px;width:105px;height:13.5px;background:#d9d9d9;"></div><svg style="left:21px;top:244.7px" width="8" height="8" viewBox="0 0 8 8"><path d="M4 .4l1.100 2.500 2.600.3-1.900 1.800.5 2.700L4 6.300 1.700 7.700l.5-2.700L.3 3.200l2.600-.3z" fill="#2f8de4"/></svg><span class="t" style="left:32.5px;top:249.4px;font-size:6.8px;color:#1f1f1f;">Quick access</span><svg style="left:25.5px;top:259.5px" width="9" height="7" viewBox="0 0 9 7"><rect x=".3" y=".3" width="8.400" height="6" rx=".5" fill="#1e90e8"/><rect x=".3" y="5.300" width="8.400" height="1.300" fill="#0b63b8"/></svg><span class="t" style="left:37px;top:263.7px;font-size:6.8px;color:#1f1f1f;">Desktop</span><svg style="left:26px;top:272.5px" width="8" height="9" viewBox="0 0 8 9"><path d="M2.600.3h2.800v4h2.300L4 8.500.3 4.300h2.300z" fill="#1e7fe0"/></svg><span class="t" style="left:37px;top:277.7px;font-size:6.8px;color:#1f1f1f;">Downloads</span><svg style="left:26.5px;top:286.5px" width="7" height="9" viewBox="0 0 7 9"><path d="M.4.4h4.400l1.800 1.800v6.400H.4z" fill="#fdfdfd" stroke="#8fa3b8" stroke-width=".6"/><path d="M1.600 3.200h3.600M1.600 4.700h3.600M1.600 6.200h3.600" stroke="#6d9bd1" stroke-width=".6"/></svg><span class="t" style="left:37px;top:291.7px;font-size:6.8px;color:#1f1f1f;">Documents</span><svg style="left:25.5px;top:301.5px" width="9" height="7" viewBox="0 0 9 7"><rect x=".4" y=".4" width="8.200" height="6.200" fill="#fff" stroke="#7d8e9f" stroke-width=".6"/><rect x="1.200" y="1.200" width="6.600" height="3.200" fill="#4fa4e8"/><path d="M1.200 5.800l2-2.300 1.600 1.500 1.200-1 1.800 1.800z" fill="#3a5e7e"/></svg><span class="t" style="left:37px;top:305.7px;font-size:6.8px;color:#1f1f1f;">Pictures</span><svg style="left:26.5px;top:314.5px" width="7" height="9" viewBox="0 0 7 9"><path d="M.3.6h4.500l1.900 1.100v7H.3z" fill="#ffe596"/><path d="M.3.600h1.100v8.100H.3z" fill="#f7d36a"/><path d="M5 .7l1.700 1v7h-.9z" fill="#ffdb7a"/><path d="M5.400 6.200l1.300.6v1.900H5.400z" fill="#f3c95a"/></svg><span class="t" style="left:37px;top:319.7px;font-size:6.8px;color:#1f1f1f;">Confused</span><svg style="left:26.5px;top:328.5px" width="7" height="9" viewBox="0 0 7 9"><path d="M.3.6h4.500l1.900 1.100v7H.3z" fill="#ffe596"/><path d="M.3.600h1.100v8.100H.3z" fill="#f7d36a"/><path d="M5 .7l1.700 1v7h-.9z" fill="#ffdb7a"/><path d="M5.400 6.200l1.300.6v1.900H5.400z" fill="#f3c95a"/></svg><span class="t" style="left:37px;top:333.7px;font-size:6.8px;color:#1f1f1f;">files to uploads</span><svg style="left:26.5px;top:342.5px" width="7" height="9" viewBox="0 0 7 9"><path d="M.3.6h4.500l1.900 1.100v7H.3z" fill="#ffe596"/><path d="M.3.600h1.100v8.100H.3z" fill="#f7d36a"/><path d="M5 .7l1.700 1v7h-.9z" fill="#ffdb7a"/><path d="M5.400 6.200l1.300.6v1.900H5.400z" fill="#f3c95a"/></svg><span class="t" style="left:37px;top:347.7px;font-size:6.8px;color:#1f1f1f;">NB 12-12</span><svg style="left:26.5px;top:356.5px" width="7" height="9" viewBox="0 0 7 9"><path d="M.3.6h4.500l1.900 1.100v7H.3z" fill="#ffe596"/><path d="M.3.600h1.100v8.100H.3z" fill="#f7d36a"/><path d="M5 .7l1.700 1v7h-.9z" fill="#ffdb7a"/><path d="M5.400 6.200l1.300.6v1.900H5.400z" fill="#f3c95a"/></svg><span class="t" style="left:37px;top:361.7px;font-size:6.8px;color:#1f1f1f;">new dropbox</span><svg style="left:20px;top:376.5px" width="10" height="7" viewBox="0 0 10 7"><path d="M2.500 6.500a2.100 2.100 0 0 1-.3-4.200 3 3 0 0 1 5.600.5 1.900 1.900 0 0 1-.1 3.700z" fill="#1277d4"/></svg><span class="t" style="left:32.5px;top:380.7px;font-size:6.8px;color:#1f1f1f;">OneDrive - Personal</span><svg style="left:26.5px;top:389.5px" width="7" height="9" viewBox="0 0 7 9"><path d="M.3.6h4.500l1.900 1.100v7H.3z" fill="#ffe596"/><path d="M.3.600h1.100v8.100H.3z" fill="#f7d36a"/><path d="M5 .7l1.700 1v7h-.9z" fill="#ffdb7a"/><path d="M5.400 6.200l1.300.6v1.900H5.400z" fill="#f3c95a"/></svg><span class="t" style="left:37px;top:394.7px;font-size:6.8px;color:#1f1f1f;">Documents</span><svg style="left:26.5px;top:403.5px" width="7" height="9" viewBox="0 0 7 9"><path d="M.3.6h4.500l1.900 1.100v7H.3z" fill="#ffe596"/><path d="M.3.600h1.100v8.100H.3z" fill="#f7d36a"/><path d="M5 .7l1.700 1v7h-.9z" fill="#ffdb7a"/><path d="M5.400 6.200l1.300.6v1.900H5.400z" fill="#f3c95a"/></svg><span class="t" style="left:37px;top:408.7px;font-size:6.8px;color:#1f1f1f;">Pictures</span><svg style="left:20px;top:421.5px" width="10" height="9" viewBox="0 0 10 9"><rect x=".5" y=".5" width="9" height="6" fill="#43b0f0" stroke="#2c6ea8" stroke-width=".6"/><path d="M3.500 6.500h3v1.200h-3zM2 8.200h6" stroke="#6a7a8a" stroke-width=".7" fill="#9ab"/></svg><span class="t" style="left:32.5px;top:426.7px;font-size:6.8px;color:#1f1f1f;">This PC</span><svg style="left:20px;top:440.5px" width="10" height="9" viewBox="0 0 10 9"><rect x="3" y=".5" width="6.500" height="4.600" fill="#3a9ae8" stroke="#205a98" stroke-width=".5" transform="skewY(-8) translate(0,1.200)"/><rect x=".5" y="3" width="5.500" height="4" fill="#5ab8f4" stroke="#205a98" stroke-width=".5"/><path d="M1.500 8.400h4" stroke="#789" stroke-width=".7"/></svg><span class="t" style="left:32.5px;top:445.7px;font-size:6.8px;color:#1f1f1f;">Network</span><div class="a" style="left:111px;top:439px;width:200px;height:14.3px;background:#f0f0f0;"></div><div class="a" style="left:121px;top:443.7px;width:70px;height:9px;background:#cdcdcd;"></div><svg style="left:113.7px;top:445.5px" width="4" height="6" viewBox="0 0 4 6"><path d="M3.200.6L.8 3l2.400 2.400" fill="none" stroke="#555" stroke-width=".9"/></svg><span class="t" style="left:14px;top:460px;font-size:6.4px;color:#333;">10 items</span><div class="a" style="left:46px;top:455.5px;width:0.7px;height:9px;background:#e3e3e3;"></div><span class="t" style="left:52px;top:460px;font-size:6.4px;color:#333;">1 item selected&nbsp; 1.00 KB</span></div></div>
<div class="win" id="pe" style="left:502px;top:86.7px;width:372.5px;height:365.8px;background:#fff;box-shadow:inset 0 0 0 .6px #9a9a9a,0 2px 8px rgba(0,0,0,.3)"><div class="a" style="left:-502px;top:-86.7px;width:1080px;height:581px"><svg style="left:508.5px;top:91px" width="9" height="9" viewBox="0 0 9 9"><path d="M1 7.500l2.500-6 2 .6-1.500 6z" fill="#c8a86a"/><rect x="3.600" y="1" width="2.400" height="2.400" fill="#e2413a" transform="rotate(12 4.800 2.200)"/><rect x="6" y="1.600" width="2.400" height="2.400" fill="#4aa24a" transform="rotate(12 7.200 2.800)"/><rect x="3" y="3.600" width="2.400" height="2.400" fill="#3a6fd0" transform="rotate(12 4.200 4.800)"/><rect x="5.500" y="4.200" width="2.400" height="2.400" fill="#f0c020" transform="rotate(12 6.700 5.400)"/><circle cx="2.500" cy="6.800" r="1.700" fill="#d8e8f8" stroke="#557" stroke-width=".5"/></svg><span class="t" style="left:520px;top:95.8px;font-size:6.75px;color:#9a9a9a;">Process Explorer - Sysinternals: www.sysinternals.com [DESKTOP-5H2EUR8\mijda]</span><div class="a" style="left:804.5px;top:95.5px;width:7px;height:0.8px;background:#b0b0b0;"></div><div class="a" style="left:830.5px;top:92px;width:7px;height:7px;background:transparent;border:.8px solid #a0a0a0"></div><svg style="left:857px;top:92px" width="7" height="7" viewBox="0 0 7 7"><path d="M.3.300l6.400 6.400M6.700.3L.3 6.700" stroke="#a0a0a0" stroke-width=".8"/></svg><span class="t" style="left:507px;top:110.8px;font-size:6.9px;color:#555;">File</span><span class="t" style="left:526px;top:110.8px;font-size:6.9px;color:#555;">Options</span><span class="t" style="left:558px;top:110.8px;font-size:6.9px;color:#555;">View</span><span class="t" style="left:581px;top:110.8px;font-size:6.9px;color:#555;">Process</span><span class="t" style="left:613px;top:110.8px;font-size:6.9px;color:#555;">Find</span><span class="t" style="left:634px;top:110.8px;font-size:6.9px;color:#555;">Users</span><span class="t" style="left:658px;top:110.8px;font-size:6.9px;color:#555;">Help</span><div class="a" style="left:503px;top:117px;width:371px;height:13.5px;background:#fff;"></div><div class="a" style="left:505.5px;top:117.2px;width:1px;height:10px;background:transparent;border-left:1px dotted #aaa"></div><svg style="left:510.5px;top:117.2px" width="9" height="9" viewBox="0 0 9 9"><rect x=".5" y=".5" width="8" height="8" fill="#2a3a9a"/><rect x="1.800" y="1" width="5.400" height="3.600" fill="#e8ecf8"/><rect x="2.500" y="6" width="4" height="2.500" fill="#c0c8e0"/></svg><svg style="left:529px;top:117.2px" width="8" height="9" viewBox="0 0 8 9"><rect x=".5" y=".5" width="7" height="8" fill="#f4f4f4" stroke="#777" stroke-width=".5"/><path d="M2.500 7a2.200 2.200 0 1 1 3-2" fill="none" stroke="#3a9a3a" stroke-width="1"/></svg><div class="a" style="left:541px;top:117.7px;width:0.7px;height:10px;background:#bbb;"></div><svg style="left:547px;top:118.2px" width="9" height="7" viewBox="0 0 9 7"><rect x=".3" y=".3" width="8.400" height="6.400" fill="#111"/><path d="M1 4h2l1-1.500 1 2 1-1h2" stroke="#2ae02a" stroke-width=".7" fill="none"/></svg><svg style="left:561.5px;top:117.2px" width="7" height="9" viewBox="0 0 7 9"><path d="M.5.500h4.500l1.500 1.500v6.500h-6z" fill="#f8f8f8" stroke="#888" stroke-width=".5"/><path d="M1.800 3.500h3.400M1.800 5h3.400M1.800 6.500h3.400" stroke="#999" stroke-width=".5"/></svg><svg style="left:573px;top:117.2px" width="9" height="9" viewBox="0 0 9 9"><rect x=".4" y=".4" width="8.200" height="8.200" fill="#fff" stroke="#2a4ab0" stroke-width=".6"/><rect x=".4" y=".4" width="8.200" height="2.200" fill="#2a5ad0"/></svg><svg style="left:587px;top:117.2px" width="8" height="9" viewBox="0 0 8 9"><path d="M.5.500h4.500l1.500 1.500v6.500h-6z" fill="#f8f8f8" stroke="#888" stroke-width=".5"/><circle cx="4" cy="5" r="2" fill="#bfe4ea" stroke="#3a8a9a" stroke-width=".6"/></svg><div class="a" style="left:600px;top:117.7px;width:0.7px;height:10px;background:#bbb;"></div><svg style="left:605.5px;top:117.7px" width="10" height="8" viewBox="0 0 10 8"><rect x="1" y="2.500" width="7" height="5" fill="#d8d8d8" stroke="#667" stroke-width=".5"/><rect x="3.500" y=".5" width="5.500" height="3.500" fill="#e8c020" stroke="#8a7010" stroke-width=".4"/></svg><svg style="left:620.5px;top:118.2px" width="7" height="7" viewBox="0 0 7 7"><path d="M.8.800l5.400 5.400M6.200.8L.8 6.200" stroke="#e0202a" stroke-width="1.500"/></svg><div class="a" style="left:632px;top:117.7px;width:0.7px;height:10px;background:#bbb;"></div><svg style="left:636.5px;top:117.7px" width="9" height="8" viewBox="0 0 9 8"><circle cx="2.300" cy="5.500" r="2" fill="#111"/><circle cx="6.700" cy="5.500" r="2" fill="#111"/><path d="M1.300 4.500L2.300.8h1.200v3.500M7.700 4.500L6.700.8H5.500v3.500" fill="#111"/></svg><svg style="left:650.5px;top:117.2px" width="9" height="9" viewBox="0 0 9 9"><circle cx="4.500" cy="4.500" r="3.600" fill="none" stroke="#222" stroke-width=".9"/><circle cx="4.500" cy="4.500" r="1.300" fill="none" stroke="#222" stroke-width=".7"/><path d="M4.500 0v9M0 4.500h9" stroke="#222" stroke-width=".6"/></svg><div class="a" style="left:668px;top:117.2px;width:1px;height:10px;background:transparent;border-left:1px dotted #aaa"></div><div class="a" style="left:672.5px;top:117px;width:36px;height:13.5px;background:#f0f0f0;border:1px solid #bdbdbd"></div><svg style="left:686px;top:125px" width="22" height="5" viewBox="0 0 22 5"><path d="M0 5l2-3 2 3z" fill="#2a9a2a"/><path d="M6 5l1.500-3.500L9 5z" fill="#2aaa2a"/><path d="M12 5l2-4.500 2 1.500 1 3z" fill="#e0202a"/><path d="M13 5l1.500-2 1.500 2z" fill="#2a9a2a"/></svg><div class="a" style="left:712.5px;top:117.2px;width:1px;height:10px;background:transparent;border-left:1px dotted #aaa"></div><div class="a" style="left:718px;top:117px;width:24.5px;height:13.5px;background:#f0f0f0;border:1px solid #bdbdbd"></div><div class="a" style="left:719px;top:123px;width:22.5px;height:7px;background:#d7d56e;border-top:1px solid #a8a620"></div><div class="a" style="left:748px;top:117.2px;width:1px;height:10px;background:transparent;border-left:1px dotted #aaa"></div><div class="a" style="left:756px;top:117.2px;width:1px;height:10px;background:transparent;border-left:1px dotted #aaa"></div><div class="a" style="left:764px;top:117.2px;width:1px;height:10px;background:transparent;border-left:1px dotted #aaa"></div><div class="a" style="left:771px;top:117.2px;width:1px;height:10px;background:transparent;border-left:1px dotted #aaa"></div><div class="a" style="left:777.5px;top:118px;width:100px;height:11px;background:#fff;border:1px solid #8a8a8a"></div><span class="t" style="left:781.5px;top:123.6px;font-size:6.7px;color:#222;font-style:italic">&lt;Filter by name&gt;</span><div class="a" style="left:503px;top:130.3px;width:371px;height:0.8px;background:#8a8a8a;"></div><div class="a" style="left:503px;top:131px;width:371px;height:12px;background:#fff;"></div><div class="a" style="left:684px;top:131px;width:6.5px;height:12px;background:#ecd87a;"></div><span class="t" style="left:684.5px;top:137.5px;font-size:6.5px;color:#333;">s</span><div class="a" style="left:691.2px;top:131px;width:44.5px;height:12px;background:#ff7f3f;"></div><span class="t" style="left:700.5px;top:137.5px;font-size:6.5px;color:#222;letter-spacing:-.2px">Working Set</span><div class="a" style="left:690.5px;top:131px;width:0.7px;height:12px;background:#ddd;"></div><div class="a" style="left:736px;top:131px;width:0.7px;height:12px;background:#ddd;"></div><div class="a" style="left:759.5px;top:131px;width:0.7px;height:12px;background:#e8e8e8;"></div><div class="a" style="left:847.5px;top:131px;width:0.7px;height:12px;background:#e8e8e8;"></div><span class="t" style="left:746.5px;top:137.5px;font-size:6.5px;color:#222;">PID</span><span class="t" style="left:763.5px;top:137.5px;font-size:6.5px;color:#222;letter-spacing:-.2px">Description</span><span class="t" style="left:851.5px;top:137.5px;font-size:6.5px;color:#222;">Com</span><div class="a" style="left:864.5px;top:131px;width:9.5px;height:330px;background:#f0f0f0;"></div><svg style="left:866.5px;top:135px" width="5" height="4" viewBox="0 0 5 4"><path d="M.5 3.200L2.500.800 4.500 3.200" fill="none" stroke="#333" stroke-width=".9"/></svg><div class="a" style="left:684px;top:143.5px;width:53px;height:9px;background:#fbe8e0;"></div><div class="a" style="left:737px;top:143.5px;width:127.5px;height:9px;background:#ccccff;"></div><span class="t" style="left:685px;top:148.5px;font-size:6.5px;color:#222;">K</span><span class="t" style="left:707.5px;top:148.5px;font-size:6.5px;color:#222;letter-spacing:-.2px">49,944 K</span><span class="t" style="left:745.5px;top:148.5px;font-size:6.5px;color:#222;letter-spacing:-.2px">6448</span><span class="t" style="left:761px;top:148.5px;font-size:6.5px;color:#222;letter-spacing:-.2px">Google Chrome</span><span class="t" style="left:849px;top:148.5px;font-size:6.5px;color:#222;">Goog</span><span class="t" style="left:627.5px;top:446.5px;font-size:6.3px;color:#333;">56.</span></div></div>
<div class="win" id="exm" style="left:185.7px;top:330px;width:441.3px;height:262px;background:#fff;box-shadow:0 0 0 .6px #7a8796,0 0 6px rgba(0,0,0,.3)"><div class="a" style="left:-185.7px;top:-330px;width:1080px;height:581px"><svg style="left:205.5px;top:433.2px" width="7" height="9" viewBox="0 0 7 9"><path d="M.3.6h4.500l1.900 1.100v7H.3z" fill="#ffe596"/><path d="M.3.600h1.100v8.100H.3z" fill="#f7d36a"/><path d="M5 .7l1.700 1v7h-.9z" fill="#ffdb7a"/><path d="M5.400 6.200l1.300.6v1.900H5.400z" fill="#f3c95a"/></svg><span class="t" style="left:216px;top:438.4px;font-size:6.8px;color:#1f1f1f;">files to uploads</span><svg style="left:205.5px;top:447.2px" width="7" height="9" viewBox="0 0 7 9"><path d="M.3.6h4.500l1.900 1.100v7H.3z" fill="#ffe596"/><path d="M.3.600h1.100v8.100H.3z" fill="#f7d36a"/><path d="M5 .7l1.700 1v7h-.9z" fill="#ffdb7a"/><path d="M5.400 6.200l1.300.6v1.900H5.400z" fill="#f3c95a"/></svg><span class="t" style="left:216px;top:452.4px;font-size:6.8px;color:#1f1f1f;">NB 12-12</span><svg style="left:205.5px;top:461px" width="7" height="9" viewBox="0 0 7 9"><path d="M.3.6h4.500l1.900 1.100v7H.3z" fill="#ffe596"/><path d="M.3.600h1.100v8.100H.3z" fill="#f7d36a"/><path d="M5 .7l1.700 1v7h-.9z" fill="#ffdb7a"/><path d="M5.400 6.200l1.300.6v1.900H5.400z" fill="#f3c95a"/></svg><span class="t" style="left:216px;top:466.2px;font-size:6.8px;color:#1f1f1f;">new dropbox</span><svg style="left:199px;top:480.5px" width="10" height="7" viewBox="0 0 10 7"><path d="M2.500 6.500a2.100 2.100 0 0 1-.3-4.200 3 3 0 0 1 5.600.5 1.900 1.900 0 0 1-.1 3.700z" fill="#1277d4"/></svg><span class="t" style="left:211.5px;top:484.7px;font-size:6.8px;color:#1f1f1f;">OneDrive - Personal</span><svg style="left:205.5px;top:493.5px" width="7" height="9" viewBox="0 0 7 9"><path d="M.3.6h4.500l1.900 1.100v7H.3z" fill="#ffe596"/><path d="M.3.600h1.100v8.100H.3z" fill="#f7d36a"/><path d="M5 .7l1.700 1v7h-.9z" fill="#ffdb7a"/><path d="M5.400 6.200l1.300.6v1.900H5.400z" fill="#f3c95a"/></svg><span class="t" style="left:216px;top:498.7px;font-size:6.8px;color:#1f1f1f;">Documents</span><svg style="left:205.5px;top:507.5px" width="7" height="9" viewBox="0 0 7 9"><path d="M.3.6h4.500l1.900 1.100v7H.3z" fill="#ffe596"/><path d="M.3.600h1.100v8.100H.3z" fill="#f7d36a"/><path d="M5 .7l1.700 1v7h-.9z" fill="#ffdb7a"/><path d="M5.400 6.200l1.300.6v1.900H5.400z" fill="#f3c95a"/></svg><span class="t" style="left:216px;top:512.7px;font-size:6.8px;color:#1f1f1f;">Pictures</span><svg style="left:199px;top:526.5px" width="10" height="9" viewBox="0 0 10 9"><rect x=".5" y=".5" width="9" height="6" fill="#43b0f0" stroke="#2c6ea8" stroke-width=".6"/><path d="M3.500 6.500h3v1.200h-3zM2 8.200h6" stroke="#6a7a8a" stroke-width=".7" fill="#9ab"/></svg><span class="t" style="left:211.5px;top:531.7px;font-size:6.8px;color:#1f1f1f;">This PC</span><svg style="left:199px;top:545px" width="10" height="9" viewBox="0 0 10 9"><rect x="3" y=".5" width="6.500" height="4.600" fill="#3a9ae8" stroke="#205a98" stroke-width=".5" transform="skewY(-8) translate(0,1.200)"/><rect x=".5" y="3" width="5.500" height="4" fill="#5ab8f4" stroke="#205a98" stroke-width=".5"/><path d="M1.500 8.400h4" stroke="#789" stroke-width=".7"/></svg><span class="t" style="left:211.5px;top:550.2px;font-size:6.8px;color:#1f1f1f;">Network</span><div class="a" style="left:291px;top:330px;width:0.7px;height:230px;background:#ededed;"></div><svg style="left:303px;top:443.3px" width="7" height="9" viewBox="0 0 7 9"><path d="M.3.6h4.500l1.900 1.100v7H.3z" fill="#ffe596"/><path d="M.3.600h1.100v8.100H.3z" fill="#f7d36a"/><path d="M5 .7l1.700 1v7h-.9z" fill="#ffdb7a"/><path d="M5.400 6.200l1.300.6v1.900H5.400z" fill="#f3c95a"/></svg><span class="t" style="left:313.5px;top:448.1px;font-size:6.8px;color:#1f1f1f;">Google</span><svg style="left:303px;top:455.57px" width="7" height="9" viewBox="0 0 7 9"><path d="M.3.6h4.500l1.900 1.100v7H.3z" fill="#ffe596"/><path d="M.3.600h1.100v8.100H.3z" fill="#f7d36a"/><path d="M5 .7l1.700 1v7h-.9z" fill="#ffdb7a"/><path d="M5.400 6.200l1.300.6v1.900H5.400z" fill="#f3c95a"/></svg><span class="t" style="left:313.5px;top:460.37px;font-size:6.8px;color:#1f1f1f;">Microsoft</span><svg style="left:303px;top:467.84px" width="7" height="9" viewBox="0 0 7 9"><path d="M.3.6h4.500l1.900 1.100v7H.3z" fill="#ffe596"/><path d="M.3.600h1.100v8.100H.3z" fill="#f7d36a"/><path d="M5 .7l1.700 1v7h-.9z" fill="#ffdb7a"/><path d="M5.400 6.200l1.300.6v1.900H5.400z" fill="#f3c95a"/></svg><span class="t" style="left:313.5px;top:472.64px;font-size:6.8px;color:#1f1f1f;">Mozilla</span><svg style="left:303px;top:480.11px" width="7" height="9" viewBox="0 0 7 9"><path d="M.3.6h4.500l1.900 1.100v7H.3z" fill="#ffe596"/><path d="M.3.600h1.100v8.100H.3z" fill="#f7d36a"/><path d="M5 .7l1.700 1v7h-.9z" fill="#ffdb7a"/><path d="M5.400 6.200l1.300.6v1.900H5.400z" fill="#f3c95a"/></svg><span class="t" style="left:313.5px;top:484.91px;font-size:6.8px;color:#1f1f1f;">MY05UITSA7OIZT6</span><svg style="left:303px;top:492.38px" width="7" height="9" viewBox="0 0 7 9"><path d="M.3.6h4.500l1.900 1.100v7H.3z" fill="#ffe596"/><path d="M.3.600h1.100v8.100H.3z" fill="#f7d36a"/><path d="M5 .7l1.700 1v7h-.9z" fill="#ffdb7a"/><path d="M5.400 6.200l1.300.6v1.900H5.400z" fill="#f3c95a"/></svg><span class="t" style="left:313.5px;top:497.18px;font-size:6.8px;color:#1f1f1f;">OneDrive</span><svg style="left:303px;top:504.65px" width="7" height="9" viewBox="0 0 7 9"><path d="M.3.6h4.500l1.900 1.100v7H.3z" fill="#ffe596"/><path d="M.3.600h1.100v8.100H.3z" fill="#f7d36a"/><path d="M5 .7l1.700 1v7h-.9z" fill="#ffdb7a"/><path d="M5.400 6.200l1.300.6v1.900H5.400z" fill="#f3c95a"/></svg><span class="t" style="left:313.5px;top:509.45px;font-size:6.8px;color:#1f1f1f;">Packages</span><svg style="left:303px;top:516.92px" width="7" height="9" viewBox="0 0 7 9"><path d="M.3.6h4.500l1.900 1.100v7H.3z" fill="#ffe596"/><path d="M.3.600h1.100v8.100H.3z" fill="#f7d36a"/><path d="M5 .7l1.700 1v7h-.9z" fill="#ffdb7a"/><path d="M5.400 6.200l1.300.6v1.900H5.400z" fill="#f3c95a"/></svg><span class="t" style="left:313.5px;top:521.72px;font-size:6.8px;color:#1f1f1f;">PeerDistRepub</span><svg style="left:303px;top:529.19px" width="7" height="9" viewBox="0 0 7 9"><path d="M.3.6h4.500l1.900 1.100v7H.3z" fill="#ffe596"/><path d="M.3.600h1.100v8.100H.3z" fill="#f7d36a"/><path d="M5 .7l1.700 1v7h-.9z" fill="#ffdb7a"/><path d="M5.400 6.200l1.300.6v1.900H5.400z" fill="#f3c95a"/></svg><span class="t" style="left:313.5px;top:533.99px;font-size:6.8px;color:#1f1f1f;">PlaceholderTileLogoFolder</span><svg style="left:303px;top:541.46px" width="7" height="9" viewBox="0 0 7 9"><path d="M.3.6h4.500l1.900 1.100v7H.3z" fill="#ffe596"/><path d="M.3.600h1.100v8.100H.3z" fill="#f7d36a"/><path d="M5 .7l1.700 1v7h-.9z" fill="#ffdb7a"/><path d="M5.400 6.200l1.300.6v1.900H5.400z" fill="#f3c95a"/></svg><span class="t" style="left:313.5px;top:546.26px;font-size:6.8px;color:#1f1f1f;">Programs</span><span class="t" style="left:453.5px;top:447.5px;font-size:6px;color:#777;">2</span><span class="t" style="left:453.5px;top:459.77px;font-size:6px;color:#777;">'</span><span class="t" style="left:453.5px;top:472.04px;font-size:6px;color:#777;">6</span><span class="t" style="left:453.5px;top:484.31px;font-size:6px;color:#777;">'</span><span class="t" style="left:453.5px;top:496.58px;font-size:6px;color:#777;">6</span><span class="t" style="left:453.5px;top:508.85px;font-size:6px;color:#777;">'</span><span class="t" style="left:453.5px;top:521.12px;font-size:6px;color:#777;">2</span><span class="t" style="left:453.5px;top:533.39px;font-size:6px;color:#777;">'</span><span class="t" style="left:453.5px;top:545.66px;font-size:6px;color:#777;">6</span><div class="a" style="left:448px;top:440px;width:8px;height:118px;background:#fff;opacity:.0"></div><div class="a" style="left:456px;top:439px;width:9.5px;height:107px;background:#f0f0f0;"></div><div class="a" style="left:456.5px;top:439px;width:8.5px;height:43.5px;background:#cdcdcd;"></div><svg style="left:458px;top:541px" width="5" height="4" viewBox="0 0 5 4"><path d="M.5.600L2.500 2.800 4.500.6" fill="none" stroke="#444" stroke-width=".9"/></svg><div class="a" style="left:291.5px;top:547px;width:165px;height:11px;background:#f0f0f0;"></div><div class="a" style="left:301px;top:548px;width:64px;height:9.5px;background:#cdcdcd;"></div><svg style="left:294.5px;top:549.8px" width="4" height="6" viewBox="0 0 4 6"><path d="M3.200.6L.8 3l2.400 2.400" fill="none" stroke="#444" stroke-width=".9"/></svg><svg style="left:449.5px;top:549.8px" width="4" height="6" viewBox="0 0 4 6"><path d="M.8.600L3.200 3 .8 5.400" fill="none" stroke="#444" stroke-width=".9"/></svg><div class="a" style="left:465.5px;top:330px;width:0.7px;height:230px;background:#ededed;"></div><span class="t" style="left:200px;top:565px;font-size:6.4px;color:#333;">22 items</span><div class="a" style="left:186px;top:572px;width:441px;height:0.8px;background:#7a8796;"></div></div></div>
<div class="win" id="form" style="left:76.5px;top:124px;width:609px;height:315.6px;background:#dfdfdf;box-shadow:inset 0 0 0 .7px #a8a8a8,0 2px 9px rgba(0,0,0,.4)"><div class="a" style="left:-76.5px;top:-124px;width:1080px;height:581px"><div class="a" style="left:77px;top:124.5px;width:608px;height:17.5px;background:#fff;"></div><svg style="left:82px;top:128.5px" width="8" height="8" viewBox="0 0 8 8"><rect x=".2" y=".2" width="7.600" height="7.600" fill="#fafafa" stroke="#d0d0d0" stroke-width=".4"/><circle cx="1.900" cy="4.300" r="1.700" fill="#c8282a"/><rect x="3.600" y=".6" width="3.900" height="3.900" fill="#e8a818" stroke="#c08808" stroke-width=".3"/><rect x="4.500" y="1.300" width="2" height="1.500" fill="#f8d860"/><rect x="3.600" y="5.300" width="3" height="1.700" fill="#2a6ad8"/></svg><span class="t" style="left:94px;top:133.2px;font-size:6.7px;color:#a2a2a2;">Form1</span><div class="a" style="left:616px;top:133.3px;width:7px;height:0.8px;background:#c2c2c2;"></div><div class="a" style="left:640.5px;top:129.6px;width:7px;height:7px;background:transparent;border:.8px solid #a8a8a8"></div><svg style="left:667px;top:129.6px" width="7" height="7" viewBox="0 0 7 7"><path d="M.3.300l6.400 6.400M6.700.3L.3 6.700" stroke="#a0a0a0" stroke-width=".8"/></svg><div class="a" style="left:77px;top:142px;width:608px;height:20px;background:#f0f0f0;"></div><span class="t" style="left:85.5px;top:151.5px;font-size:6.6px;color:#222;">Token</span><div class="a" style="left:108.5px;top:145px;width:271px;height:12.5px;background:#fff;border:1px solid #7a7a7a;overflow:visible"></div><div class="a" style="left:109.5px;top:146px;width:235.5px;height:10.8px;background:#cbcbcb;box-shadow:0 0 1.500px .6px #7cd0f0,0 0 5px 2.500px #a8e0f2;border-radius:.5px;border-top:.7px solid #666;border-left:.7px solid #666"></div><div class="a" style="left:384.5px;top:144.5px;width:23.5px;height:13px;background:#e1e1e1;border:1.200px solid #2a7ad2"></div><span class="t" style="left:389px;top:151px;font-size:6.4px;color:#222;">sync</span><div class="a" style="left:77px;top:162px;width:491px;height:50.5px;background:#fff;border-top:1px solid #555;border-left:1px solid #888"></div><div class="a" style="left:77px;top:174.2px;width:491.5px;height:0.8px;background:#b2b2b2;"></div><div class="a" style="left:77px;top:187.1px;width:491.5px;height:0.8px;background:#b2b2b2;"></div><div class="a" style="left:77px;top:200px;width:491.5px;height:0.8px;background:#b2b2b2;"></div><div class="a" style="left:77px;top:212.4px;width:491.5px;height:0.8px;background:#b2b2b2;"></div><div class="a" style="left:100.5px;top:162.5px;width:0.8px;height:50.5px;background:#b2b2b2;"></div><div class="a" style="left:217.5px;top:162.5px;width:0.8px;height:50.5px;background:#b2b2b2;"></div><div class="a" style="left:334px;top:162.5px;width:0.8px;height:50.5px;background:#b2b2b2;"></div><div class="a" style="left:451.5px;top:162.5px;width:0.8px;height:50.5px;background:#b2b2b2;"></div><div class="a" style="left:567.8px;top:162.5px;width:0.8px;height:50.5px;background:#b2b2b2;"></div><span class="t" style="left:105px;top:168.7px;font-size:6.5px;color:#222;">IP</span><span class="t" style="left:222px;top:168.7px;font-size:6.5px;color:#222;letter-spacing:-.15px">User Name</span><span class="t" style="left:338.5px;top:168.7px;font-size:6.5px;color:#222;letter-spacing:-.15px">Computer Name</span><span class="t" style="left:455.5px;top:168.7px;font-size:6.5px;color:#222;letter-spacing:-.15px">Last Connection</span><svg style="left:81.5px;top:178px" width="4" height="5.5" viewBox="0 0 4 5.5"><path d="M.3.300v4.900L3.400 2.750z" fill="#222"/></svg><div class="a" style="left:101.3px;top:175.1px;width:116.2px;height:11.9px;background:#0078d7;"></div><span class="t" style="left:103px;top:181.2px;font-size:6.5px;color:#fff;letter-spacing:-.2px">185.244.39.105</span><span class="t" style="left:219.5px;top:181.2px;font-size:6.5px;color:#222;">mijda</span><span class="t" style="left:336.5px;top:181.2px;font-size:6.5px;color:#222;letter-spacing:-.25px">DESKTOP-5H2EUR8</span><span class="t" style="left:453.5px;top:181.2px;font-size:6.5px;color:#222;letter-spacing:-.25px">14-12-2021 23:24:05</span><div class="a" style="left:102.5px;top:190.6px;width:427px;height:20px;background:#d0d0d0;border:.8px solid #555;border-radius:.8px;box-shadow:0 0 1.500px .8px #5cc8f0,0 0 5px 2.500px #a4def2"></div></div></div>
<div class="win" id="exs" style="left:635px;top:151.5px;width:442.2px;height:345.3px;background:#fff;box-shadow:inset 0 0 0 .7px rgba(90,105,130,.45),0 3px 10px rgba(0,0,0,.4)"><div class="a" style="left:-635px;top:-151.5px;width:1080px;height:581px"><svg style="left:641.27px;top:155.32px" width="8.05" height="10.35" viewBox="0 0 7 9"><path d="M.3.6h4.500l1.900 1.100v7H.3z" fill="#ffe596"/><path d="M.3.600h1.100v8.100H.3z" fill="#f7d36a"/><path d="M5 .7l1.700 1v7h-.9z" fill="#ffdb7a"/><path d="M5.400 6.200l1.300.6v1.900H5.400z" fill="#f3c95a"/></svg><div class="a" style="left:654.5px;top:156.5px;width:0.8px;height:8px;background:#b8b8b8;"></div><svg style="left:660.5px;top:155.7px" width="8" height="9.5" viewBox="0 0 8 9.5"><path d="M.4.4h5l1.900 1.900v6.800H.4z" fill="#fff" stroke="#7d7d7d" stroke-width=".6"/><path d="M1.600 4.600l1.600 1.800 2.700-3.600" fill="none" stroke="#e05a2a" stroke-width=".9"/></svg><svg style="left:673.98px;top:155.32px" width="8.05" height="10.35" viewBox="0 0 7 9"><path d="M.3.6h4.500l1.900 1.100v7H.3z" fill="#ffe596"/><path d="M.3.600h1.100v8.100H.3z" fill="#f7d36a"/><path d="M5 .7l1.700 1v7h-.9z" fill="#ffdb7a"/><path d="M5.400 6.200l1.300.6v1.900H5.400z" fill="#f3c95a"/></svg><div class="a" style="left:685.5px;top:158.9px;width:4px;height:0.8px;background:#444;"></div><svg style="left:685.5px;top:160.5px" width="4" height="3" viewBox="0 0 4 3"><path d="M.2.300h3.600L2 2.500z" fill="#444"/></svg><div class="a" style="left:694px;top:156.5px;width:0.8px;height:8px;background:#b8b8b8;"></div><span class="t" style="left:700px;top:160.8px;font-size:6.7px;color:#111;">Startup</span><div class="a" style="left:1006.5px;top:160px;width:7px;height:0.9px;background:#222;"></div><div class="a" style="left:1033.5px;top:156.7px;width:7px;height:7px;background:transparent;border:.9px solid #222"></div><svg style="left:1060px;top:157px" width="7" height="7" viewBox="0 0 7 7"><path d="M.3.300l6.400 6.400M6.700.3L.3 6.700" stroke="#222" stroke-width=".9"/></svg><div class="a" style="left:636px;top:169.3px;width:32.8px;height:13.7px;background:#0563b5;"></div><span class="t" style="left:647.5px;top:176.5px;font-size:6.9px;color:#fff;">File</span><div class="a" style="left:669px;top:169.5px;width:34px;height:14px;background:#f5f6f7;border:1px solid #e6e7e8;border-bottom:none"></div><span class="t" style="left:677px;top:176.5px;font-size:6.9px;color:#1f1f1f;">Home</span><span class="t" style="left:711px;top:176.5px;font-size:6.9px;color:#1f1f1f;">Share</span><span class="t" style="left:745px;top:176.5px;font-size:6.9px;color:#1f1f1f;">View</span><svg style="left:1054.5px;top:174.5px" width="6" height="4" viewBox="0 0 6 4"><path d="M.5 3.200L3 .700l2.500 2.500" fill="none" stroke="#9a9a9a" stroke-width=".8"/></svg><div class="a" style="left:1065.8px;top:171.5px;width:9.4px;height:9.4px;background:#0f6fd0;border-radius:50%"></div><span class="t" style="left:1068.6px;top:176.4px;font-size:7px;color:#fff;font-weight:bold">?</span><div class="a" style="left:636px;top:183px;width:441px;height:53px;background:#f5f6f7;border-top:1px solid #dadbdc;border-bottom:1px solid #dadbdc"></div><svg style="left:652px;top:191px" width="12" height="12" viewBox="0 0 12 12"><path d="M7 .6l4.400 4.400-1.600.3L7.200 8l-.2 2.400L1.800 5l2.300-.2 2.700-2.600zM3.800 8.200L.6 11.400" fill="#7c8794" stroke="#7c8794" stroke-width=".8" stroke-linejoin="round"/></svg><span class="t" style="left:640.5px;top:212.3px;font-size:6.7px;color:#333;">Pin to Quick</span><span class="t" style="left:649.5px;top:220px;font-size:6.7px;color:#333;">access</span><svg style="left:684px;top:190px" width="12" height="14" viewBox="0 0 12 14"><path d="M.5.500h5l2 2v7.500h-7z" fill="#e9edf3" stroke="#a8b4c4" stroke-width=".6"/><path d="M4 3.500h5l2.500 2.500v7.500H4z" fill="#dfe8f6" stroke="#8fa6c6" stroke-width=".6"/><path d="M5.200 7.500h5M5.200 9.200h5M5.200 10.900h5" stroke="#a9bfe0" stroke-width=".6"/></svg><span class="t" style="left:683px;top:212.3px;font-size:6.7px;color:#8c8c8c;">Copy</span><svg style="left:709.5px;top:189px" width="11" height="15" viewBox="0 0 11 15"><rect x=".5" y="1.800" width="10" height="12.600" rx=".6" fill="#e6ebf2" stroke="#7f8fa6" stroke-width=".7"/><rect x="3.200" y=".4" width="4.600" height="2.800" rx=".6" fill="#7f8fa6"/><rect x="2" y="4" width="7" height="8.800" fill="#fdfdfe" stroke="#b8c4d6" stroke-width=".4"/></svg><span class="t" style="left:707.5px;top:212.3px;font-size:6.7px;color:#8c8c8c;">Paste</span><svg style="left:730px;top:188px" width="7" height="9" viewBox="0 0 7 9"><path d="M1.500.4l3.300 5.400M5.500.4L2.200 5.800" stroke="#8d9aa8" stroke-width=".7" fill="none"/><circle cx="1.700" cy="7.100" r="1.200" fill="none" stroke="#4a7ab8" stroke-width=".7"/><circle cx="5.300" cy="7.100" r="1.200" fill="none" stroke="#4a7ab8" stroke-width=".7"/></svg><span class="t" style="left:741px;top:192.7px;font-size:6.7px;color:#8c8c8c;">Cut</span><div class="a" style="left:729.5px;top:203.3px;width:8.5px;height:4.4px;background:#dce6f4;border:.5px solid #9fb6d6"></div><span class="t" style="left:730.5px;top:205.6px;font-size:3.2px;color:#6a8fc4;">W...</span><span class="t" style="left:741px;top:205.5px;font-size:6.7px;color:#8c8c8c;">Copy path</span><svg style="left:730px;top:213.5px" width="7" height="9" viewBox="0 0 7 9"><rect x=".5" y="1" width="6" height="7.500" fill="#f4f7fb" stroke="#6a7f9c" stroke-width=".7"/><rect x="2.200" y=".2" width="2.600" height="1.600" fill="#6a7f9c"/><path d="M2.200 6.500l2.300-2.300M3 4h1.700v1.700" stroke="#3a6fb8" stroke-width=".6" fill="none"/></svg><span class="t" style="left:741px;top:218.3px;font-size:6.7px;color:#8c8c8c;">Paste shortcut</span><span class="t" style="left:698px;top:231.5px;font-size:6.7px;color:#555;">Clipboard</span><div class="a" style="left:789.5px;top:186px;width:0.8px;height:47px;background:#e2e3e4;"></div><svg style="left:795px;top:191px" width="8" height="11" viewBox="0 0 8 11"><rect x=".4" y=".4" width="6.400" height="9.500" fill="#d9e4f5" stroke="#c2d0e6" stroke-width=".4"/><path d="M6.800 8H3M4.500 6.500L3 8l1.500 1.500" stroke="#4a86d0" stroke-width=".8" fill="none"/></svg><span class="t" style="left:806px;top:197.6px;font-size:6.7px;color:#8c8c8c;">Move to</span><svg style="left:831.5px;top:196px" width="3.5" height="2.5" viewBox="0 0 3.5 2.5"><path d="M.2.300h3L1.700 2.100z" fill="#9a9a9a"/></svg><svg style="left:795px;top:208px" width="8" height="11" viewBox="0 0 8 11"><rect x=".4" y=".4" width="5" height="7" fill="#eef2f8" stroke="#b4c4dc" stroke-width=".5"/><rect x="2.200" y="2.400" width="5" height="7.500" fill="#e4ecf8" stroke="#b4c4dc" stroke-width=".5"/></svg><span class="t" style="left:806px;top:214.6px;font-size:6.7px;color:#8c8c8c;">Copy to</span><svg style="left:829.5px;top:213px" width="3.5" height="2.5" viewBox="0 0 3.5 2.5"><path d="M.2.300h3L1.700 2.100z" fill="#9a9a9a"/></svg><div class="a" style="left:839.5px;top:189px;width:0.8px;height:31px;background:#e2e3e4;"></div><svg style="left:844px;top:193px" width="8" height="8" viewBox="0 0 8 8"><path d="M.8.800l6.400 6.400M7.200.8L.8 7.200" stroke="#5f7196" stroke-width="1.700"/></svg><span class="t" style="left:855px;top:197.6px;font-size:6.7px;color:#8c8c8c;">Delete</span><svg style="left:875.5px;top:195.7px" width="4" height="3" viewBox="0 0 4 3"><path d="M.3.300h3.400L2 2.300z" fill="#444"/></svg><svg style="left:843px;top:210px" width="10" height="8" viewBox="0 0 10 8"><rect x=".4" y="2" width="7" height="4" fill="#e8eef8" stroke="#8aa0c0" stroke-width=".5"/><path d="M7.500.4v7.200M6.300.4h2.400M6.300 7.600h2.400" stroke="#4a6a98" stroke-width=".6"/></svg><span class="t" style="left:855px;top:214.6px;font-size:6.7px;color:#8c8c8c;">Rename</span><span class="t" style="left:823px;top:231.5px;font-size:6.7px;color:#555;">Organize</span><div class="a" style="left:885.5px;top:186px;width:0.8px;height:47px;background:#e2e3e4;"></div><svg style="left:893.5px;top:189.3px" width="12.4" height="17" viewBox="0 0 35 48"><defs><linearGradient id="fg2" x1="0" y1="0" x2="1" y2="0"><stop offset="0" stop-color="#f0c95e"/><stop offset=".35" stop-color="#f7d473"/><stop offset="1" stop-color="#ffe28c"/></linearGradient></defs><path d="M.4.400H29.300V25l3 2.200V40.300H8z" fill="url(#fg2)"/><path d="M.4.400L11.300 11.300 10 48 .4 40.800z" fill="#ffe9a2"/></svg><span class="t" style="left:894px;top:212.3px;font-size:6.7px;color:#222;">New</span><span class="t" style="left:892px;top:220px;font-size:6.7px;color:#222;">folder</span><svg style="left:915px;top:187.5px" width="13" height="9" viewBox="0 0 13 9"><rect x=".4" y=".4" width="5" height="3.500" fill="#bcd4f0" stroke="#6a8fc0" stroke-width=".5"/><rect x="3" y="2.500" width="5" height="6" fill="#fff" stroke="#7a8a9c" stroke-width=".5"/><path d="M9.800 4.300h3L11.300 6z" fill="#333"/></svg><svg style="left:915px;top:201px" width="13" height="9" viewBox="0 0 13 9"><path d="M2 .5h4.200l1.600 1.600v6.400H2z" fill="#fff" stroke="#7a8a9c" stroke-width=".6"/><path d="M.3 2.500l2.200-1.800" stroke="#3a7fd0" stroke-width=".8"/><path d="M9.800 3.800h3L11.300 5.500z" fill="#333"/></svg><span class="t" style="left:902.5px;top:231.5px;font-size:6.7px;color:#555;">New</span><div class="a" style="left:934.5px;top:186px;width:0.8px;height:47px;background:#e2e3e4;"></div><svg style="left:946px;top:189px" width="14" height="16" viewBox="0 0 14 16"><path d="M.5.500h9.500l3.500 3.500v11.500H.5z" fill="#fff" stroke="#8c96a4" stroke-width=".7"/><path d="M10 .5v3.500h3.500" fill="none" stroke="#8c96a4" stroke-width=".7"/><path d="M3 8.500l3 3.300 5-7" fill="none" stroke="#e8501e" stroke-width="1.500"/></svg><span class="t" style="left:938px;top:212.3px;font-size:6.7px;color:#222;">Properties</span><svg style="left:951px;top:218.5px" width="4" height="3" viewBox="0 0 4 3"><path d="M.3.300h3.400L2 2.300z" fill="#333"/></svg><svg style="left:972.5px;top:187.5px" width="13" height="9" viewBox="0 0 13 9"><rect x=".5" y=".4" width="5" height="8" fill="#dce8f8" stroke="#9ab4d8" stroke-width=".5"/><path d="M3 2v4.500M1.800 5.300L3 6.600l1.200-1.300" stroke="#7a9cd0" stroke-width=".6" fill="none"/><path d="M9.600 4.300h2.600L10.900 5.800z" fill="#bbb"/></svg><svg style="left:973px;top:200.5px" width="8" height="9" viewBox="0 0 8 9"><path d="M.5.500h4.500l2 2v6H.5z" fill="#f4f8fd" stroke="#a8bcd8" stroke-width=".6"/><path d="M2 7l4-4.500" stroke="#8aa8d8" stroke-width=".8"/></svg><svg style="left:972px;top:213.5px" width="11" height="10" viewBox="0 0 11 10"><path d="M.5.500h5v8H.5z" fill="#ffe08a" stroke="#e0b848" stroke-width=".4"/><circle cx="6.500" cy="6" r="3.200" fill="#e8f0e8" stroke="#5a8a5a" stroke-width=".6"/><path d="M6.500 4.200V6l1.300.8" stroke="#333" stroke-width=".5" fill="none"/><path d="M2 5.800l2.400 1.500" stroke="#2a9a2a" stroke-width="1.200"/></svg><span class="t" style="left:954.5px;top:231.5px;font-size:6.7px;color:#555;">Open</span><div class="a" style="left:992.5px;top:186px;width:0.8px;height:47px;background:#e2e3e4;"></div><svg style="left:997px;top:188px" width="10" height="10" viewBox="0 0 10 10"><rect x="0.4" y="0.4" width="3.900" height="3.900" fill="#3b9bea" stroke="#1f78d0" stroke-width=".5" /><rect x="5.1000000000000005" y="0.4" width="3.900" height="3.900" fill="#3b9bea" stroke="#1f78d0" stroke-width=".5" /><rect x="0.4" y="5.1000000000000005" width="3.900" height="3.900" fill="#3b9bea" stroke="#1f78d0" stroke-width=".5" /><rect x="5.1000000000000005" y="5.1000000000000005" width="3.900" height="3.900" fill="#3b9bea" stroke="#1f78d0" stroke-width=".5" /></svg><span class="t" style="left:1008px;top:192.7px;font-size:6.7px;color:#222;">Select all</span><svg style="left:997px;top:200.8px" width="10" height="10" viewBox="0 0 10 10"><rect x="0.4" y="0.4" width="3.900" height="3.900" fill="#fbfbfb" stroke="#9a9a9a" stroke-width=".5" stroke-dasharray=".7 .5"/><rect x="5.1000000000000005" y="0.4" width="3.900" height="3.900" fill="#fbfbfb" stroke="#9a9a9a" stroke-width=".5" stroke-dasharray=".7 .5"/><rect x="0.4" y="5.1000000000000005" width="3.900" height="3.900" fill="#fbfbfb" stroke="#9a9a9a" stroke-width=".5" stroke-dasharray=".7 .5"/><rect x="5.1000000000000005" y="5.1000000000000005" width="3.900" height="3.900" fill="#fbfbfb" stroke="#9a9a9a" stroke-width=".5" stroke-dasharray=".7 .5"/></svg><span class="t" style="left:1008px;top:205.5px;font-size:6.7px;color:#222;">Select none</span><svg style="left:997px;top:213.5px" width="10" height="10" viewBox="0 0 10 10"><rect x="0.4" y="0.4" width="3.900" height="3.900" fill="#f6f9fd" stroke="#3a80c8" stroke-width=".5" /><rect x="5.1000000000000005" y="0.4" width="3.900" height="3.900" fill="#3b9bea" stroke="#3a80c8" stroke-width=".5" /><rect x="0.4" y="5.1000000000000005" width="3.900" height="3.900" fill="#3b9bea" stroke="#3a80c8" stroke-width=".5" /><rect x="5.1000000000000005" y="5.1000000000000005" width="3.900" height="3.900" fill="#f6f9fd" stroke="#3a80c8" stroke-width=".5" /></svg><span class="t" style="left:1008px;top:218.3px;font-size:6.7px;color:#222;">Invert selection</span><span class="t" style="left:1016.5px;top:231.5px;font-size:6.7px;color:#555;">Select</span><div class="a" style="left:1059.5px;top:186px;width:0.8px;height:47px;background:#e2e3e4;"></div><svg style="left:642px;top:245px" width="8" height="8" viewBox="0 0 8 8"><path d="M7.500 4H.8M3.800.8L.600 4l3.200 3.200" fill="none" stroke="#555" stroke-width=".85"/></svg><svg style="left:660px;top:245px" width="8" height="8" viewBox="0 0 8 8"><path d="M.5 4h6.700M4.200.8L7.400 4 4.200 7.200" fill="none" stroke="#c8c8c8" stroke-width=".85"/></svg><svg style="left:676px;top:248px" width="4" height="3" viewBox="0 0 4 3"><path d="M.4.5L2 2.1 3.600.5" fill="none" stroke="#777" stroke-width="0.7"/></svg><svg style="left:687px;top:245px" width="8" height="8" viewBox="0 0 8 8"><path d="M4 7.600V.8M.8 4L4 .8 7.200 4" fill="none" stroke="#555" stroke-width=".85"/></svg><div class="a" style="left:698px;top:240.2px;width:278.5px;height:17.3px;background:#fff;border:1px solid #d9d9d9"></div><svg style="left:700.83px;top:244.28px" width="7.35" height="9.45" viewBox="0 0 7 9"><path d="M.3.6h4.500l1.900 1.100v7H.3z" fill="#ffe596"/><path d="M.3.600h1.100v8.100H.3z" fill="#f7d36a"/><path d="M5 .7l1.700 1v7h-.9z" fill="#ffdb7a"/><path d="M5.400 6.200l1.300.6v1.900H5.400z" fill="#f3c95a"/></svg><span class="t" style="left:710px;top:248.6px;font-size:7px;color:#555;">«</span><span class="t" style="left:721px;top:249px;font-size:6.8px;color:#222;">Windows</span><span class="t" style="left:754.5px;top:248.8px;font-size:7px;color:#555;">›</span><span class="t" style="left:763px;top:249px;font-size:6.8px;color:#222;">Start Menu</span><span class="t" style="left:802.5px;top:248.8px;font-size:7px;color:#555;">›</span><span class="t" style="left:811px;top:249px;font-size:6.8px;color:#222;">Programs</span><span class="t" style="left:845.5px;top:248.8px;font-size:7px;color:#555;">›</span><span class="t" style="left:854px;top:249px;font-size:6.8px;color:#222;">Startup</span><svg style="left:947.5px;top:247.5px" width="5" height="4" viewBox="0 0 5 4"><path d="M.5.600L2.500 2.800 4.500.6" fill="none" stroke="#444" stroke-width=".8"/></svg><div class="a" style="left:958.5px;top:240.2px;width:0.8px;height:17.3px;background:#d9d9d9;"></div><svg style="left:964px;top:245.5px" width="7" height="7" viewBox="0 0 7 7"><path d="M5.800 3.500A2.500 2.500 0 1 1 4.800 1.500" fill="none" stroke="#555" stroke-width=".8"/><path d="M3.600.2l1.600 1.300-1.500 1.300" fill="none" stroke="#555" stroke-width=".7"/></svg><div class="a" style="left:983px;top:240.2px;width:86.5px;height:17.3px;background:#fff;border:1px solid #d9d9d9"></div><svg style="left:990.5px;top:245.5px" width="7" height="7" viewBox="0 0 7 7"><circle cx="4.200" cy="2.800" r="2.200" fill="none" stroke="#777" stroke-width=".7"/><path d="M2.600 4.400L.5 6.500" stroke="#777" stroke-width=".8"/></svg><span class="t" style="left:1007px;top:249px;font-size:6.8px;color:#767676;">Search Startup</span><div class="a" style="left:636px;top:271.3px;width:103.5px;height:13.3px;background:#d9d9d9;"></div><svg style="left:650.5px;top:273.9px" width="8" height="8" viewBox="0 0 8 8"><path d="M4 .4l1.100 2.500 2.600.3-1.900 1.800.5 2.700L4 6.300 1.700 7.700l.5-2.700L.3 3.200l2.600-.3z" fill="#2f8de4"/></svg><span class="t" style="left:662px;top:278.6px;font-size:6.8px;color:#1f1f1f;">Quick access</span><svg style="left:655px;top:288.5px" width="9" height="7" viewBox="0 0 9 7"><rect x=".3" y=".3" width="8.400" height="6" rx=".5" fill="#1e90e8"/><rect x=".3" y="5.300" width="8.400" height="1.300" fill="#0b63b8"/></svg><span class="t" style="left:666.5px;top:292.7px;font-size:6.8px;color:#1f1f1f;">Desktop</span><svg style="left:655.5px;top:301.5px" width="8" height="9" viewBox="0 0 8 9"><path d="M2.600.3h2.800v4h2.300L4 8.500.3 4.300h2.300z" fill="#1e7fe0"/></svg><span class="t" style="left:666.5px;top:306.7px;font-size:6.8px;color:#1f1f1f;">Downloads</span><svg style="left:656px;top:315.5px" width="7" height="9" viewBox="0 0 7 9"><path d="M.4.4h4.400l1.800 1.800v6.400H.4z" fill="#fdfdfd" stroke="#8fa3b8" stroke-width=".6"/><path d="M1.600 3.200h3.600M1.600 4.700h3.600M1.600 6.200h3.600" stroke="#6d9bd1" stroke-width=".6"/></svg><span class="t" style="left:666.5px;top:320.7px;font-size:6.8px;color:#1f1f1f;">Documents</span><svg style="left:655px;top:330.5px" width="9" height="7" viewBox="0 0 9 7"><rect x=".4" y=".4" width="8.200" height="6.200" fill="#fff" stroke="#7d8e9f" stroke-width=".6"/><rect x="1.200" y="1.200" width="6.600" height="3.200" fill="#4fa4e8"/><path d="M1.200 5.800l2-2.300 1.600 1.500 1.200-1 1.800 1.800z" fill="#3a5e7e"/></svg><span class="t" style="left:666.5px;top:334.7px;font-size:6.8px;color:#1f1f1f;">Pictures</span><svg style="left:656px;top:343.5px" width="7" height="9" viewBox="0 0 7 9"><path d="M.3.6h4.500l1.900 1.100v7H.3z" fill="#ffe596"/><path d="M.3.600h1.100v8.100H.3z" fill="#f7d36a"/><path d="M5 .7l1.700 1v7h-.9z" fill="#ffdb7a"/><path d="M5.400 6.200l1.300.6v1.900H5.400z" fill="#f3c95a"/></svg><span class="t" style="left:666.5px;top:348.7px;font-size:6.8px;color:#1f1f1f;">Confused</span><svg style="left:656px;top:357.5px" width="7" height="9" viewBox="0 0 7 9"><path d="M.3.6h4.500l1.900 1.100v7H.3z" fill="#ffe596"/><path d="M.3.600h1.100v8.100H.3z" fill="#f7d36a"/><path d="M5 .7l1.700 1v7h-.9z" fill="#ffdb7a"/><path d="M5.400 6.200l1.300.6v1.900H5.400z" fill="#f3c95a"/></svg><span class="t" style="left:666.5px;top:362.7px;font-size:6.8px;color:#1f1f1f;">files to uploads</span><svg style="left:656px;top:371.5px" width="7" height="9" viewBox="0 0 7 9"><path d="M.3.6h4.500l1.900 1.100v7H.3z" fill="#ffe596"/><path d="M.3.600h1.100v8.100H.3z" fill="#f7d36a"/><path d="M5 .7l1.700 1v7h-.9z" fill="#ffdb7a"/><path d="M5.400 6.200l1.300.6v1.900H5.400z" fill="#f3c95a"/></svg><span class="t" style="left:666.5px;top:376.7px;font-size:6.8px;color:#1f1f1f;">NB 12-12</span><svg style="left:656px;top:385.5px" width="7" height="9" viewBox="0 0 7 9"><path d="M.3.6h4.500l1.900 1.100v7H.3z" fill="#ffe596"/><path d="M.3.600h1.100v8.100H.3z" fill="#f7d36a"/><path d="M5 .7l1.700 1v7h-.9z" fill="#ffdb7a"/><path d="M5.400 6.200l1.300.6v1.900H5.400z" fill="#f3c95a"/></svg><span class="t" style="left:666.5px;top:390.7px;font-size:6.8px;color:#1f1f1f;">new dropbox</span><svg style="left:649.5px;top:405.5px" width="10" height="7" viewBox="0 0 10 7"><path d="M2.500 6.500a2.100 2.100 0 0 1-.3-4.200 3 3 0 0 1 5.600.5 1.900 1.900 0 0 1-.1 3.700z" fill="#1277d4"/></svg><span class="t" style="left:662px;top:409.7px;font-size:6.8px;color:#1f1f1f;">OneDrive - Personal</span><svg style="left:656px;top:418.5px" width="7" height="9" viewBox="0 0 7 9"><path d="M.3.6h4.500l1.900 1.100v7H.3z" fill="#ffe596"/><path d="M.3.600h1.100v8.100H.3z" fill="#f7d36a"/><path d="M5 .7l1.700 1v7h-.9z" fill="#ffdb7a"/><path d="M5.400 6.200l1.300.6v1.900H5.400z" fill="#f3c95a"/></svg><span class="t" style="left:666.5px;top:423.7px;font-size:6.8px;color:#1f1f1f;">Documents</span><svg style="left:656px;top:432.5px" width="7" height="9" viewBox="0 0 7 9"><path d="M.3.6h4.500l1.900 1.100v7H.3z" fill="#ffe596"/><path d="M.3.600h1.100v8.100H.3z" fill="#f7d36a"/><path d="M5 .7l1.700 1v7h-.9z" fill="#ffdb7a"/><path d="M5.400 6.200l1.300.6v1.900H5.400z" fill="#f3c95a"/></svg><span class="t" style="left:666.5px;top:437.7px;font-size:6.8px;color:#1f1f1f;">Pictures</span><svg style="left:649.5px;top:451px" width="10" height="9" viewBox="0 0 10 9"><rect x=".5" y=".5" width="9" height="6" fill="#43b0f0" stroke="#2c6ea8" stroke-width=".6"/><path d="M3.500 6.500h3v1.200h-3zM2 8.200h6" stroke="#6a7a8a" stroke-width=".7" fill="#9ab"/></svg><span class="t" style="left:662px;top:456.2px;font-size:6.8px;color:#1f1f1f;">This PC</span><svg style="left:649.5px;top:469.5px" width="10" height="9" viewBox="0 0 10 9"><rect x="3" y=".5" width="6.500" height="4.600" fill="#3a9ae8" stroke="#205a98" stroke-width=".5" transform="skewY(-8) translate(0,1.200)"/><rect x=".5" y="3" width="5.500" height="4" fill="#5ab8f4" stroke="#205a98" stroke-width=".5"/><path d="M1.500 8.400h4" stroke="#789" stroke-width=".7"/></svg><span class="t" style="left:662px;top:474.7px;font-size:6.8px;color:#1f1f1f;">Network</span><svg style="left:731px;top:289.5px" width="5" height="5" viewBox="0 0 5 5"><path d="M2.800.3l2 2-1 .2-1 1 .1 1.200L1 2.800l1.200.1 1-1zM1.800 3.200L.3 4.700" fill="#8a8a8a" stroke="#8a8a8a" stroke-width=".5"/></svg><svg style="left:731px;top:303.5px" width="5" height="5" viewBox="0 0 5 5"><path d="M2.800.3l2 2-1 .2-1 1 .1 1.200L1 2.800l1.200.1 1-1zM1.800 3.200L.3 4.700" fill="#8a8a8a" stroke="#8a8a8a" stroke-width=".5"/></svg><svg style="left:731px;top:317.5px" width="5" height="5" viewBox="0 0 5 5"><path d="M2.800.3l2 2-1 .2-1 1 .1 1.200L1 2.800l1.200.1 1-1zM1.800 3.200L.3 4.700" fill="#8a8a8a" stroke="#8a8a8a" stroke-width=".5"/></svg><svg style="left:731px;top:331.5px" width="5" height="5" viewBox="0 0 5 5"><path d="M2.800.3l2 2-1 .2-1 1 .1 1.200L1 2.800l1.200.1 1-1zM1.800 3.200L.3 4.700" fill="#8a8a8a" stroke="#8a8a8a" stroke-width=".5"/></svg><div class="a" style="left:740.5px;top:262px;width:0.7px;height:222px;background:#f0f0f0;"></div><svg style="left:820.5px;top:262.5px" width="5" height="3.5" viewBox="0 0 5 3.5"><path d="M.5 3L2.500.800 4.500 3" fill="none" stroke="#8a8a8a" stroke-width=".7"/></svg><span class="t" style="left:751px;top:269px;font-size:6.7px;color:#4c607a;">Name</span><div class="a" style="left:900px;top:262.5px;width:0.7px;height:14px;background:#e5e5e5;"></div><span class="t" style="left:904px;top:269px;font-size:6.7px;color:#4c607a;">Dat</span><span class="t" style="left:797px;top:290px;font-size:6.7px;color:#6d6d6d;">This folder is empty.</span><div class="a" style="left:741px;top:471.5px;width:175px;height:11.5px;background:#f0f0f0;"></div><div class="a" style="left:751px;top:472.5px;width:73.5px;height:9.5px;background:#cdcdcd;"></div><svg style="left:743.5px;top:474.5px" width="4" height="6" viewBox="0 0 4 6"><path d="M3.200.6L.8 3l2.400 2.400" fill="none" stroke="#444" stroke-width=".9"/></svg><svg style="left:908.5px;top:474.5px" width="4" height="6" viewBox="0 0 4 6"><path d="M.8.600L3.200 3 .8 5.400" fill="none" stroke="#444" stroke-width=".9"/></svg><div class="a" style="left:915.5px;top:262px;width:0.7px;height:222px;background:#f0f0f0;"></div><span class="t" style="left:930px;top:272.5px;font-size:8.8px;color:#222;">0 items</span><svg style="left:939.5px;top:301px" width="35" height="48" viewBox="0 0 35 48"><defs><linearGradient id="fg" x1="0" y1="0" x2="1" y2="0"><stop offset="0" stop-color="#f0c95e"/><stop offset=".35" stop-color="#f7d473"/><stop offset="1" stop-color="#ffe28c"/></linearGradient></defs><path d="M.4.400H29.300V25l3 2.200V40.300H8z" fill="url(#fg)"/><path d="M.4.400L11.300 11.300 10 48 .4 40.800z" fill="#ffe9a2"/></svg><span class="t" style="left:644px;top:489.3px;font-size:6.4px;color:#333;">0 items</span><div class="a" style="left:671.5px;top:485px;width:0.7px;height:9px;background:#ececec;"></div><div class="a" style="left:1049.5px;top:484.5px;width:11.5px;height:10.5px;background:#cfe6fb;border:.8px solid #56a0e0"></div><div class="a" style="left:1051.5px;top:486.8px;width:2px;height:1.3px;background:#557;"></div><div class="a" style="left:1054.5px;top:486.8px;width:4.5px;height:1.3px;background:#8a9ab0;"></div><div class="a" style="left:1051.5px;top:489.1px;width:2px;height:1.3px;background:#557;"></div><div class="a" style="left:1054.5px;top:489.1px;width:4.5px;height:1.3px;background:#8a9ab0;"></div><div class="a" style="left:1051.5px;top:491.4px;width:2px;height:1.3px;background:#557;"></div><div class="a" style="left:1054.5px;top:491.4px;width:4.5px;height:1.3px;background:#8a9ab0;"></div><svg style="left:1063px;top:485.5px" width="9" height="8" viewBox="0 0 9 8"><rect x=".4" y=".4" width="8.200" height="6.400" fill="#fff" stroke="#667" stroke-width=".6"/><rect x="1.500" y="1.500" width="6" height="3" fill="#5a8ac8"/></svg></div></div>
<div class="a" id="tb" style="left:0;top:0;width:1080px;height:581px"><div class="a" style="left:0px;top:557.5px;width:1080px;height:23.5px;background:#05161f;"></div><div class="a" style="left:186px;top:557.5px;width:441px;height:14.5px;background:#202325;"></div><span class="t" style="left:200px;top:564.5px;font-size:6.2px;color:#0c0f12;">22 items</span><div class="a" style="left:600.5px;top:560px;width:9px;height:9px;background:#1a1d1f;border:.6px solid #2a2e32"></div><div class="a" style="left:613.5px;top:560px;width:9px;height:9px;background:#1a1d1f;border:.6px solid #2a2e32"></div><svg style="left:9px;top:564.3px" width="10" height="10" viewBox="0 0 10 10"><path d="M0 1.400L4.100.850V4.700H0zM4.700.750L9.800 0V4.700H4.700zM0 5.300H4.100V9.150L0 8.600zM4.700 5.300H9.800V10L4.700 9.250z" fill="#fff"/></svg><div class="a" style="left:37.3px;top:564.7px;width:9.6px;height:9.6px;background:transparent;border:1.500px solid #fff;border-radius:50%"></div><svg style="left:64.5px;top:564.5px" width="11" height="10" viewBox="0 0 11 10"><rect x="1.300" y="1.800" width="5.400" height="6.400" fill="none" stroke="#fff" stroke-width="1"/><path d="M.8.600h6.400M.8 9.400h6.400" stroke="#fff" stroke-width=".7"/><path d="M9.200 1v1.200M9.200 3.400v1.600M9.200 6v3" stroke="#fff" stroke-width="1"/></svg><svg style="left:93px;top:563px" width="13.5" height="13.5" viewBox="0 0 13.5 13.5"><defs><linearGradient id="eg" x1="0" y1="1" x2="1" y2="0"><stop offset="0" stop-color="#0c59a4"/><stop offset=".45" stop-color="#1b9de2"/><stop offset=".8" stop-color="#3cc86a"/><stop offset="1" stop-color="#6ee06a"/></linearGradient></defs><circle cx="6.750" cy="6.750" r="6.600" fill="url(#eg)"/><path d="M.4 8C.6 4.500 3.600 2.800 6.500 3c2.600.200 4 1.800 4 3.400 0 1.400-1.200 2-2.600 2H5.800c.3 1.900 2.400 3 4.900 2.100-1.300 2.300-5 3-7.800 1.300C1.300 10.800.3 9.500.4 8z" fill="#0b4a9a" opacity=".85"/><path d="M5.800 8.400c-.4-1.200.2-2.200 1.200-2.600 1-.300 2 .100 2.300.9.200.700-.2 1.500-1 1.700z" fill="#0d1e2c" opacity=".0"/></svg><div class="a" style="left:114.7px;top:557.5px;width:27.3px;height:23.5px;background:#2c3a44;"></div><div class="a" style="left:114.7px;top:579.3px;width:27.3px;height:1.7px;background:#86b8e6;"></div><svg style="left:121.5px;top:563.5px" width="14" height="12" viewBox="0 0 14 12"><path d="M.5 1.500h5l1 1.500h7v8.500H.5z" fill="#f4b400"/><path d="M.5 4h13v7.500H.5z" fill="#ffd75e"/><rect x="3.500" y="7.500" width="7" height="4" fill="#3a8ee6"/><rect x="5" y="9.500" width="4" height="2" fill="#ffd75e"/></svg><svg style="left:150px;top:563px" width="13.5" height="13.5" viewBox="0 0 13.5 13.5"><path d="M4 3.500V2a2.700 2.700 0 0 1 5.400 0v1.500" fill="none" stroke="#4aa0e8" stroke-width=".9"/><rect x=".8" y="3.500" width="12" height="9.500" rx="1" fill="#f2f2f2"/><rect x="4" y="5.800" width="2.400" height="2.400" fill="#f25022"/><rect x="7" y="5.800" width="2.400" height="2.400" fill="#7fba00"/><rect x="4" y="8.800" width="2.400" height="2.400" fill="#00a4ef"/><rect x="7" y="8.800" width="2.400" height="2.400" fill="#ffb900"/></svg><svg style="left:178.5px;top:564px" width="15" height="12" viewBox="0 0 15 12"><path d="M.5 4.500L7.500.3l7 4.200v7H.5z" fill="#0a6ad0"/><path d="M.5 4.500l7 4.500 7-4.500v7H.5z" fill="#38a6f0"/><path d="M.5 11.500l5-4.500M14.500 11.500l-5-4.500" stroke="#0a6ad0" stroke-width=".6"/></svg><svg style="left:208.5px;top:563px" width="11" height="14" viewBox="0 0 11 14"><path d="M7 .3l3.700 1.200v11L7 13.700.5 11V3l6.500-2.700zM7 3.300L3.200 4.500v5L7 10.800z" fill="#e8401c" fill-rule="evenodd"/></svg><svg style="left:236.5px;top:563px" width="13" height="13" viewBox="0 0 13 13"><circle cx="6.500" cy="6.500" r="6.300" fill="#fbc116"/><path d="M6.500 6.500L1 3.300A6.300 6.300 0 0 1 12.300 4z" fill="#e33b2e"/><path d="M6.500 6.500L1 3.300A6.300 6.300 0 0 0 5.500 12.700L8.500 8z" fill="#2da94f"/><circle cx="6.500" cy="6.500" r="2.900" fill="#fff"/><circle cx="6.500" cy="6.500" r="2.300" fill="#3f86f4"/></svg><svg style="left:264.5px;top:563px" width="14" height="13" viewBox="0 0 14 13"><rect x="3" y="1" width="4" height="4" fill="#e2413a" transform="rotate(10 5 3)"/><rect x="8" y="2" width="4" height="4" fill="#4aa24a" transform="rotate(10 10 4)"/><rect x="2.500" y="6" width="4" height="4" fill="#3a6fd0" transform="rotate(10 4.500 8)"/><rect x="7.500" y="7" width="4" height="4" fill="#f0c020" transform="rotate(10 9.500 9)"/><circle cx="5" cy="5.500" r="3" fill="#cfe4f8" stroke="#778" stroke-width=".7" opacity=".9"/><path d="M3 8l-2.500 4" stroke="#b8b8b8" stroke-width="1.400"/></svg><div class="a" style="left:259.5px;top:579.3px;width:23.5px;height:1.7px;background:#86b8e6;"></div><span class="t" style="left:292.5px;top:570px;font-size:11px;color:#e89a2a;font-family:'DejaVu Sans Condensed','DejaVu Sans',sans-serif;letter-spacing:-.6px">RH</span><div class="a" style="left:321.5px;top:563px;width:13px;height:13px;background:#b8111a;border-radius:1px"></div><span class="t" style="left:323.5px;top:569.8px;font-size:9.5px;color:#fff;font-weight:bold;font-style:italic;letter-spacing:-.8px">Fz</span><svg style="left:350.5px;top:563px" width="14" height="13" viewBox="0 0 14 13"><rect x=".5" y="1.500" width="10.500" height="11" fill="#e4f0c8" stroke="#6a8a2a" stroke-width=".6"/><path d="M2 5h7M2 7h7M2 9h5" stroke="#4a6a1a" stroke-width=".7"/><path d="M6 9l6.500-8 1 1L7 10z" fill="#f0d020" stroke="#8a7a10" stroke-width=".4"/></svg><svg style="left:378.5px;top:563px" width="13" height="13" viewBox="0 0 13 13"><circle cx="6.500" cy="6.500" r="6.300" fill="#fbc116"/><path d="M6.500 6.500L1 3.300A6.300 6.300 0 0 1 12.300 4z" fill="#e33b2e"/><path d="M6.500 6.500L1 3.300A6.300 6.300 0 0 0 5.500 12.700L8.500 8z" fill="#2da94f"/><circle cx="6.500" cy="6.500" r="2.900" fill="#fff"/><circle cx="6.500" cy="6.500" r="2.300" fill="#3f86f4"/></svg><div class="a" style="left:387.5px;top:571px;width:7.5px;height:7.5px;background:#f2622a;border-radius:50%"></div><span class="t" style="left:389.5px;top:574.9px;font-size:4.6px;color:#fff;font-weight:bold">A</span><div class="a" style="left:374.5px;top:579.3px;width:23.5px;height:1.7px;background:#86b8e6;"></div><svg style="left:408.5px;top:563px" width="13" height="13" viewBox="0 0 13 13"><path d="M6.500 1l2 1.200v2.300l2-1 2 1.200v2.600l-2 1.200 .100 2.300-2 1.200-2-1.200-2 1.200-2-1.200V8.500L.5 7.300V4.700l2-1.200 2 1V2.200z" fill="#2f8fd8"/><path d="M6.500 3.500v3l-2.500 1.500M6.500 6.500l2.500 1.500M6.500 9v3" stroke="#0c4a8a" stroke-width=".7" fill="none"/></svg><div class="a" style="left:403px;top:579.3px;width:23.5px;height:1.7px;background:#86b8e6;"></div><svg style="left:436.5px;top:563.5px" width="14" height="12" viewBox="0 0 14 12"><rect x="4" y=".5" width="9.500" height="11" rx=".8" fill="#41a5ee"/><rect x="4" y="3.300" width="9.500" height="2.800" fill="#2b7cd3"/><rect x="4" y="6.100" width="9.500" height="2.700" fill="#185abd"/><rect x="4" y="8.800" width="9.500" height="2.700" rx=".5" fill="#103f91"/><rect x=".5" y="2.700" width="7" height="7" rx=".7" fill="#185abd"/></svg><span class="t" style="left:438.2px;top:569.9px;font-size:5.5px;color:#fff;font-weight:bold">W</span><div class="a" style="left:431.5px;top:579.3px;width:23.5px;height:1.7px;background:#86b8e6;"></div><svg style="left:466px;top:563.5px" width="13" height="13" viewBox="0 0 13 13"><rect x=".5" y=".5" width="12" height="12" fill="#f0f0f0" stroke="#777" stroke-width=".5"/><rect x="1" y="1" width="11" height="2.200" fill="#2a62c8"/><rect x="1.500" y="4" width="4.500" height="4" fill="#e23b2e"/><rect x="6.800" y="4" width="4.700" height="4" fill="#f2b01e"/><rect x="1.500" y="8.600" width="4.500" height="3.400" fill="#3a8a3a"/><rect x="6.800" y="8.600" width="4.700" height="3.400" fill="#f2b01e"/></svg><div class="a" style="left:460px;top:579.3px;width:23.5px;height:1.7px;background:#86b8e6;"></div><svg style="left:792.500px;top:564.500px" width="14" height="10" viewBox="0 0 10 7"><path d="M2.500 6.500a2.100 2.100 0 0 1-.3-4.200 3 3 0 0 1 5.600.5 1.900 1.900 0 0 1-.1 3.700z" fill="#cfe6fb"/></svg><span class="t" style="left:811.5px;top:570.3px;font-size:7.7px;color:#fff;">50°F&nbsp; Cloudy</span><div class="a" style="left:866.5px;top:565.5px;width:8.5px;height:8.5px;background:#d83a4a;"></div><svg style="left:866.5px;top:565.5px" width="8.5" height="8.5" viewBox="0 0 8.5 8.5"><path d="M0 8.500V5l2-2 2 2.500 2-3 2.500 2.500v3.500z" fill="#3aba4a"/></svg><div class="a" style="left:880.5px;top:565.5px;width:8.5px;height:8.5px;background:#e4e4e4;border:.4px solid #999"></div><div class="a" style="left:881px;top:571.5px;width:3px;height:2px;background:#c84a3a;"></div><svg style="left:894.5px;top:565px" width="9" height="9.5" viewBox="0 0 9 9.5"><path d="M4.500.5l3.800 2v4.500l-3.800 2-3.800-2V2.500z" fill="#e8eef4" stroke="#8a9ab0" stroke-width=".5"/><path d="M4.500 4.500v4.500M.7 2.500l3.800 2 3.800-2" stroke="#6a8ab8" stroke-width=".5" fill="none"/><circle cx="6.300" cy="6.800" r="1.600" fill="#f0b020"/></svg><svg style="left:908.5px;top:565.5px" width="10" height="9" viewBox="0 0 10 9"><rect x="2.500" y=".5" width="7" height="5" fill="#fff"/><rect x="3.500" y="1.500" width="5" height="3" fill="#05161f"/><path d="M6 5.500v2M4 8h4" stroke="#fff" stroke-width=".9"/><rect x=".3" y="3" width="3" height="4.500" fill="#fff"/></svg><svg style="left:922.5px;top:565px" width="10" height="10" viewBox="0 0 10 10"><path d="M4.500.5l3.800 1.200v3.500c0 2.200-1.800 3.600-3.800 4.300C2.500 8.800.7 7.400.7 5.200V1.700z" fill="#f4f4f4" stroke="#bbb" stroke-width=".3"/><path d="M4.500.5v9C2.500 8.800.7 7.400.7 5.200V1.700z" fill="#cfd6de"/><path d="M7.300 4.800l2.600 4.700H4.700z" fill="#ffc61a" stroke="#8a6a00" stroke-width=".3"/><path d="M7.300 6.300v1.700M7.300 8.500v.5" stroke="#222" stroke-width=".6"/></svg><svg style="left:936px;top:566.5px" width="10" height="7" viewBox="0 0 10 7"><path d="M2.500 6.500a2.100 2.100 0 0 1-.3-4.200 3 3 0 0 1 5.600.5 1.900 1.900 0 0 1-.1 3.700z" fill="#f0f0f0"/></svg><svg style="left:950.5px;top:565px" width="9" height="10" viewBox="0 0 9 10"><rect x="1.200" y="1.500" width="6" height="6" rx="1.500" fill="none" stroke="#fff" stroke-width=".8"/><circle cx="4.200" cy="4.500" r="1.200" fill="none" stroke="#fff" stroke-width=".7"/><path d="M7.200 3.500h1.300v2.500H7.200M2 9.300h4.500" stroke="#fff" stroke-width=".7" fill="none"/></svg><svg style="left:964px;top:565.5px" width="10" height="9" viewBox="0 0 10 9"><rect x="2.500" y=".5" width="7" height="5" fill="none" stroke="#fff" stroke-width=".8"/><path d="M6 5.500v2M4 8h4" stroke="#fff" stroke-width=".8"/><rect x=".3" y="3" width="2.800" height="4.500" fill="#05161f" stroke="#fff" stroke-width=".6"/></svg><svg style="left:978.5px;top:565.5px" width="10" height="9" viewBox="0 0 10 9"><path d="M.5 3h2l2.500-2.300v7.600L2.500 6h-2z" fill="none" stroke="#fff" stroke-width=".7"/><path d="M6.200 3a2.200 2.200 0 0 1 0 3M7.600 1.800a4 4 0 0 1 0 5.400" fill="none" stroke="#fff" stroke-width=".6"/></svg><span class="t" style="left:994px;top:570.3px;font-size:6.6px;color:#fff;">ENG</span><span class="t" style="left:1017px;top:564px;font-size:6.6px;color:#fff;">11:25 PM</span><span class="t" style="left:1015px;top:575.5px;font-size:6.6px;color:#fff;">12/14/2021</span><svg style="left:1056px;top:565px" width="10" height="10" viewBox="0 0 10 10"><path d="M.5.500h8.500v6.500H4.500l-2 2V7H.5z" fill="#fff"/><path d="M2 2.500h5.500M2 4.500h5.500" stroke="#05161f" stroke-width=".7"/></svg><div class="a" style="left:1061.5px;top:570.5px;width:6.5px;height:6.5px;background:#05161f;border-radius:50%;border:.7px solid #fff"></div><span class="t" style="left:1063.5px;top:574px;font-size:4.8px;color:#fff;">5</span></div>
</body></html>
